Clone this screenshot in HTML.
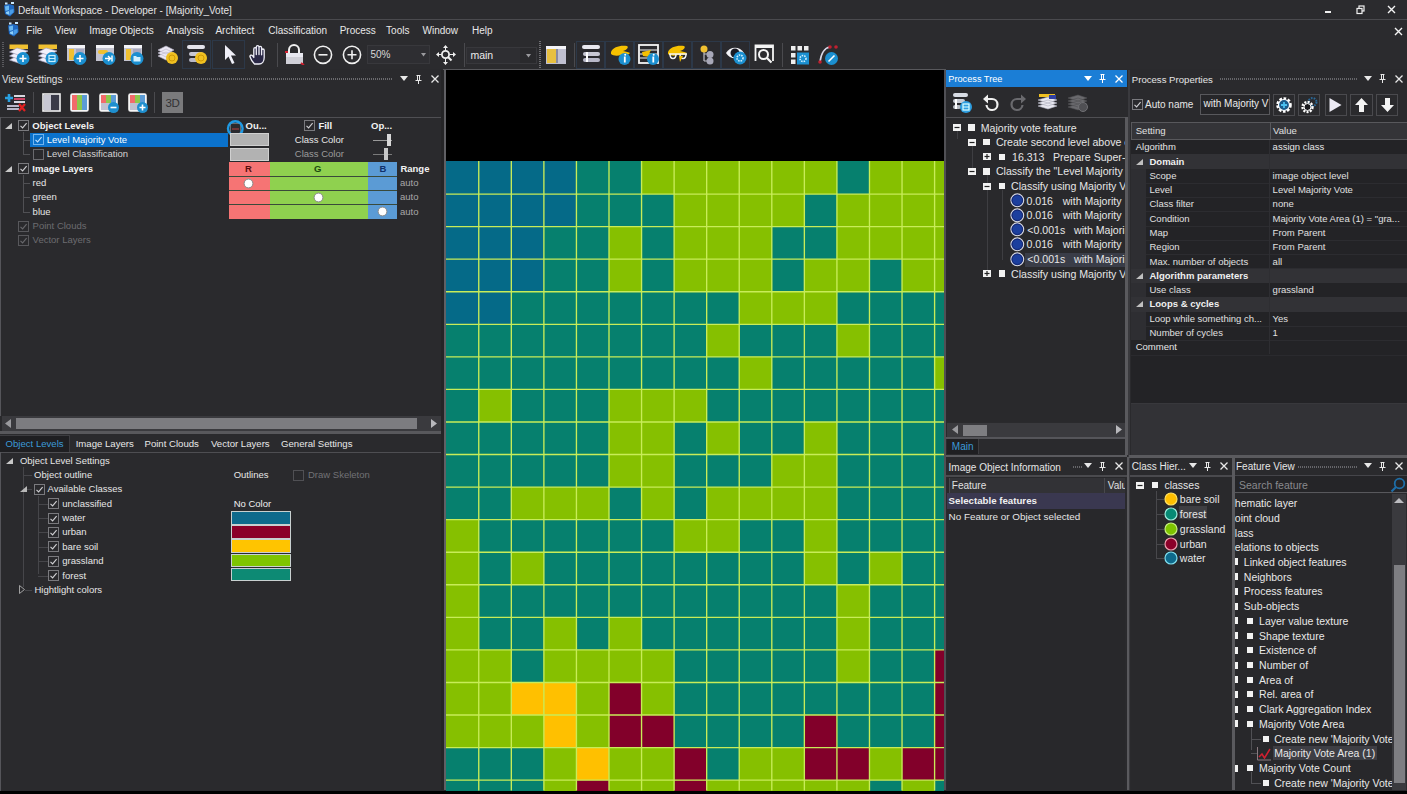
<!DOCTYPE html><html><head><meta charset="utf-8"><style>
html,body{margin:0;padding:0;width:1407px;height:794px;overflow:hidden;background:#2a2a2d;}
body{position:relative;font-family:"Liberation Sans",sans-serif;}
div{position:absolute;box-sizing:border-box;}
.t{white-space:pre;}
</style></head><body>
<div style="left:0px;top:0px;width:1407px;height:19px;background:#2b2b2e;"></div>
<div style="left:0px;top:19px;width:1407px;height:1px;background:#4a4a4e;"></div>
<svg style="position:absolute;left:3px;top:2px;" width="12" height="15" viewBox="0 0 12 15"><path d="M1 3.5 L6 2 L11 3.5 L11.5 10 L7 14.5 L2 12 Z" fill="#1f68c0"/><path d="M2 4.5 L6 3.5 L6 8 L2.5 9 Z" fill="#6ab8f0"/><path d="M6.5 8 L10.5 7 L10.5 10.5 L7 13 Z" fill="#4a9ee8"/><path d="M3 10 L6 9 L6.5 13 L3 11.5 Z" fill="#8ccff8"/><rect x="2" y="0.5" width="2.5" height="2" fill="#c8e8ff"/><rect x="8" y="0" width="3" height="2" fill="#c8e8ff"/></svg>
<div class="t" style="left:18px;top:3.80px;font-size:10px;line-height:14px;color:#e4e4e4;font-weight:400;">Default Workspace - Developer - [Majority_Vote]</div>
<div style="left:1325px;top:11px;width:6px;height:2px;background:#f0f0f0;"></div>
<svg style="position:absolute;left:1356px;top:5px;" width="9" height="10" viewBox="0 0 9 10"><rect x="3" y="1" width="5" height="5" fill="none" stroke="#f0f0f0" stroke-width="1.2"/><rect x="1" y="3.5" width="5" height="5" fill="#2b2b2e" stroke="#f0f0f0" stroke-width="1.2"/></svg>
<svg style="position:absolute;left:1387px;top:5px;" width="9" height="9" viewBox="0 0 9 9"><path d="M1 1 L8 8 M8 1 L1 8" stroke="#f4f4f4" stroke-width="1.4"/></svg>
<div style="left:0px;top:20px;width:1407px;height:20px;background:#2b2b2e;"></div>
<svg style="position:absolute;left:7px;top:22px;" width="12" height="15" viewBox="0 0 12 15"><path d="M1 3.5 L6 2 L11 3.5 L11.5 10 L7 14.5 L2 12 Z" fill="#1f68c0"/><path d="M2 4.5 L6 3.5 L6 8 L2.5 9 Z" fill="#6ab8f0"/><path d="M6.5 8 L10.5 7 L10.5 10.5 L7 13 Z" fill="#4a9ee8"/><path d="M3 10 L6 9 L6.5 13 L3 11.5 Z" fill="#8ccff8"/><rect x="2" y="0.5" width="2.5" height="2" fill="#c8e8ff"/><rect x="8" y="0" width="3" height="2" fill="#c8e8ff"/></svg>
<div class="t" style="left:26.3px;top:24.00px;font-size:10px;line-height:14px;color:#e8e8e8;font-weight:400;">File</div>
<div class="t" style="left:54.7px;top:24.00px;font-size:10px;line-height:14px;color:#e8e8e8;font-weight:400;">View</div>
<div class="t" style="left:89.2px;top:24.00px;font-size:10px;line-height:14px;color:#e8e8e8;font-weight:400;">Image Objects</div>
<div class="t" style="left:166.5px;top:24.00px;font-size:10px;line-height:14px;color:#e8e8e8;font-weight:400;">Analysis</div>
<div class="t" style="left:215.4px;top:24.00px;font-size:10px;line-height:14px;color:#e8e8e8;font-weight:400;">Architect</div>
<div class="t" style="left:268.2px;top:24.00px;font-size:10px;line-height:14px;color:#e8e8e8;font-weight:400;">Classification</div>
<div class="t" style="left:339.7px;top:24.00px;font-size:10px;line-height:14px;color:#e8e8e8;font-weight:400;">Process</div>
<div class="t" style="left:386.1px;top:24.00px;font-size:10px;line-height:14px;color:#e8e8e8;font-weight:400;">Tools</div>
<div class="t" style="left:422.5px;top:24.00px;font-size:10px;line-height:14px;color:#e8e8e8;font-weight:400;">Window</div>
<div class="t" style="left:472px;top:24.00px;font-size:10px;line-height:14px;color:#e8e8e8;font-weight:400;">Help</div>
<svg style="position:absolute;left:1394px;top:27px;" width="9" height="9" viewBox="0 0 9 9"><path d="M1 1 L8 8 M8 1 L1 8" stroke="#f4f4f4" stroke-width="1.4"/></svg>
<div style="left:0px;top:40px;width:1407px;height:29px;background:#2b2b2e;"></div>
<div style="left:443px;top:69px;width:503px;height:1.3px;background:#58585c;"></div>
<div style="left:0px;top:70px;width:444px;height:362px;background:#2a2a2d;"></div>
<div class="t" style="left:2px;top:73.00px;font-size:10px;line-height:14px;color:#e0e0e0;font-weight:400;">View Settings</div>
<div style="left:67px;top:78px;width:326px;height:2px;background:repeating-linear-gradient(90deg,#6a6a6e 0 1px,transparent 1px 2px)"></div>
<svg style="position:absolute;left:400px;top:76px;" width="8" height="5" viewBox="0 0 8 5"><path d="M0 0 L8 0 L4 5 Z" fill="#e8e8e8"/></svg>
<svg style="position:absolute;left:415px;top:74.5px;" width="7" height="9" viewBox="0 0 7 9"><path d="M1.5 0.5 H5.5 M2.5 0.5 V5 M4.5 0.5 V5 M0.5 5.5 H6.5 M3.5 5.5 V9" stroke="#e8e8e8" stroke-width="1" fill="none"/></svg>
<svg style="position:absolute;left:431px;top:75px;" width="8" height="8" viewBox="0 0 8 8"><path d="M0.5 0.5 L7.5 7.5 M7.5 0.5 L0.5 7.5" stroke="#e8e8e8" stroke-width="1.3"/></svg>
<svg style="position:absolute;left:4px;top:92px;" width="22" height="21" viewBox="0 0 22 21"><path d="M5 2 V10 M1 6 H9" stroke="#29a0e0" stroke-width="2.6"/><rect x="10" y="3" width="11" height="2" fill="#d8d8e0"/><rect x="10" y="6" width="11" height="2" fill="#c46"/><rect x="10" y="9" width="11" height="2" fill="#d8d8e0"/><rect x="3" y="13" width="12" height="2" fill="#b8b8c8"/><rect x="3" y="16" width="12" height="2" fill="#b8b8c8"/><path d="M15 12 L21 19 M21 12 L15 19" stroke="#e02020" stroke-width="2.2"/></svg>
<div style="left:33px;top:92px;width:1px;height:21px;background:#4a4a4e;"></div>
<svg style="position:absolute;left:42px;top:93px;" width="19" height="19" viewBox="0 0 19 19"><rect x="1" y="1" width="17" height="17" fill="#3a3a48" stroke="#f0f0f0" stroke-width="1.6"/><rect x="2" y="2" width="7" height="15" fill="#c8c8d4"/></svg>
<svg style="position:absolute;left:70px;top:93px;" width="19" height="19" viewBox="0 0 19 19"><rect x="1" y="1" width="17" height="17" fill="#fff" stroke="#f4f4f4" stroke-width="1.6" rx="1.5"/><rect x="2" y="2" width="5" height="15" fill="#f26b6b"/><rect x="7" y="2" width="5" height="15" fill="#8cc84b"/><rect x="12" y="2" width="5" height="15" fill="#5b9bd5"/></svg>
<svg style="position:absolute;left:99px;top:93px;" width="21" height="21" viewBox="0 0 21 21"><rect x="1" y="1" width="17" height="17" fill="#fff" stroke="#f4f4f4" stroke-width="1.6" rx="1.5"/><rect x="2" y="2" width="5" height="8" fill="#f26b6b"/><rect x="7" y="2" width="5" height="8" fill="#8cc84b"/><rect x="12" y="2" width="5" height="8" fill="#5b9bd5"/><rect x="2" y="10" width="15" height="7" fill="#c0c0d0"/><circle cx="14.5" cy="14.5" r="5.5" fill="#1e8fcf"/><path d="M11.5 14.5 H17.5" stroke="#fff" stroke-width="1.6"/></svg>
<svg style="position:absolute;left:128px;top:93px;" width="21" height="21" viewBox="0 0 21 21"><rect x="1" y="1" width="17" height="17" fill="#fff" stroke="#f4f4f4" stroke-width="1.6" rx="1.5"/><rect x="2" y="2" width="5" height="8" fill="#f26b6b"/><rect x="7" y="2" width="5" height="8" fill="#8cc84b"/><rect x="12" y="2" width="5" height="8" fill="#5b9bd5"/><rect x="2" y="10" width="15" height="7" fill="#c0c0d0"/><circle cx="14.5" cy="14.5" r="5.5" fill="#1e8fcf"/><path d="M11.5 14.5 H17.5 M14.5 11.5 V17.5" stroke="#fff" stroke-width="1.6"/></svg>
<div style="left:154px;top:92px;width:1px;height:21px;background:#4a4a4e;"></div>
<div style="left:162px;top:92px;width:21px;height:21px;background:#7a7a7c;"></div>
<div class="t" style="left:165.5px;top:95.80px;font-size:11.5px;line-height:14px;color:#323234;font-weight:400;letter-spacing:-0.3px;">3D</div>
<div style="left:0px;top:117px;width:443px;height:1px;background:#4f4f53;"></div>
<svg style="position:absolute;left:5px;top:122.5px;" width="7" height="6" viewBox="0 0 7 6"><path d="M7 0 L7 6 L0 6 Z" fill="#c8c8c8"/></svg>
<svg style="position:absolute;left:18px;top:120.0px;" width="11" height="11" viewBox="0 0 11 11"><rect x="0.5" y="0.5" width="10" height="10" fill="none" stroke="#7a7a7e" stroke-width="1"/><path d="M2.5 5.8 L4.6 7.9 L8.6 3.2" fill="none" stroke="#cfcfd2" stroke-width="1.15"/></svg>
<div class="t" style="left:32.3px;top:118.50px;font-size:9.5px;line-height:14px;color:#f2f2f2;font-weight:700;">Object Levels</div>
<div style="left:30px;top:133px;width:198px;height:14px;background:#0b72cc;"></div>
<svg style="position:absolute;left:32.5px;top:134.37px;" width="11" height="11" viewBox="0 0 11 11"><rect x="0.5" y="0.5" width="10" height="10" fill="none" stroke="#6fb4f0" stroke-width="1"/><path d="M2.5 5.8 L4.6 7.9 L8.6 3.2" fill="none" stroke="#bfe0ff" stroke-width="1.15"/></svg>
<div class="t" style="left:46.8px;top:132.87px;font-size:9.5px;line-height:14px;color:#f4fbff;font-weight:400;">Level Majority Vote</div>
<svg style="position:absolute;left:32.5px;top:148.74px;" width="11" height="11" viewBox="0 0 11 11"><rect x="0.5" y="0.5" width="10" height="10" fill="none" stroke="#6a6a6e" stroke-width="1"/></svg>
<div class="t" style="left:46.8px;top:147.24px;font-size:9.5px;line-height:14px;color:#d4d4d4;font-weight:400;">Level Classification</div>
<div style="left:23px;top:132px;width:1px;height:23px;background:#505054;"></div>
<div style="left:23px;top:139.87px;width:7px;height:1px;background:#505054;"></div>
<div style="left:23px;top:154.24px;width:7px;height:1px;background:#505054;"></div>
<svg style="position:absolute;left:5px;top:165.61px;" width="7" height="6" viewBox="0 0 7 6"><path d="M7 0 L7 6 L0 6 Z" fill="#c8c8c8"/></svg>
<svg style="position:absolute;left:18px;top:163.11px;" width="11" height="11" viewBox="0 0 11 11"><rect x="0.5" y="0.5" width="10" height="10" fill="none" stroke="#7a7a7e" stroke-width="1"/><path d="M2.5 5.8 L4.6 7.9 L8.6 3.2" fill="none" stroke="#cfcfd2" stroke-width="1.15"/></svg>
<div class="t" style="left:32.3px;top:161.61px;font-size:9.5px;line-height:14px;color:#f2f2f2;font-weight:700;">Image Layers</div>
<div style="left:23px;top:175px;width:1px;height:37px;background:#505054;"></div>
<div style="left:23px;top:182.98px;width:7px;height:1px;background:#505054;"></div>
<div class="t" style="left:32.6px;top:175.98px;font-size:9.5px;line-height:14px;color:#e6e6e6;font-weight:400;">red</div>
<div style="left:23px;top:197.35px;width:7px;height:1px;background:#505054;"></div>
<div class="t" style="left:32.6px;top:190.35px;font-size:9.5px;line-height:14px;color:#e6e6e6;font-weight:400;">green</div>
<div style="left:23px;top:211.72px;width:7px;height:1px;background:#505054;"></div>
<div class="t" style="left:32.6px;top:204.72px;font-size:9.5px;line-height:14px;color:#e6e6e6;font-weight:400;">blue</div>
<svg style="position:absolute;left:18px;top:220.58999999999997px;" width="11" height="11" viewBox="0 0 11 11"><rect x="0.5" y="0.5" width="10" height="10" fill="none" stroke="#58585c" stroke-width="1"/><path d="M2.5 5.8 L4.6 7.9 L8.6 3.2" fill="none" stroke="#68686c" stroke-width="1.15"/></svg>
<div class="t" style="left:32.6px;top:219.09px;font-size:9.5px;line-height:14px;color:#6c6c70;font-weight:400;">Point Clouds</div>
<svg style="position:absolute;left:18px;top:234.95999999999998px;" width="11" height="11" viewBox="0 0 11 11"><rect x="0.5" y="0.5" width="10" height="10" fill="none" stroke="#58585c" stroke-width="1"/><path d="M2.5 5.8 L4.6 7.9 L8.6 3.2" fill="none" stroke="#68686c" stroke-width="1.15"/></svg>
<div class="t" style="left:32.6px;top:233.46px;font-size:9.5px;line-height:14px;color:#6c6c70;font-weight:400;">Vector Layers</div>
<svg style="position:absolute;left:226px;top:119px;" width="20" height="20" viewBox="0 0 20 20"><rect x="4.5" y="4.5" width="10" height="10" fill="#2a2a2e" stroke="#6a6a6e" stroke-width="1"/><path d="M6 10 H13" stroke="#a04040" stroke-width="1.2"/><circle cx="9.3" cy="9.5" r="7.3" fill="none" stroke="#1f9ae4" stroke-width="2.4"/></svg>
<div class="t" style="left:245.6px;top:118.50px;font-size:9.5px;line-height:14px;color:#f2f2f2;font-weight:700;">Ou...</div>
<svg style="position:absolute;left:304px;top:120.0px;" width="11" height="11" viewBox="0 0 11 11"><rect x="0.5" y="0.5" width="10" height="10" fill="none" stroke="#7a7a7e" stroke-width="1"/><path d="M2.5 5.8 L4.6 7.9 L8.6 3.2" fill="none" stroke="#cfcfd2" stroke-width="1.15"/></svg>
<div class="t" style="left:318.4px;top:118.50px;font-size:9.5px;line-height:14px;color:#f2f2f2;font-weight:700;">Fill</div>
<div class="t" style="left:371px;top:118.50px;font-size:9.5px;line-height:14px;color:#f2f2f2;font-weight:700;">Op...</div>
<div style="left:229.5px;top:133.4px;width:39.5px;height:13px;background:#b2b2b2;border:1px solid #d0d0d0;"></div>
<div style="left:229.5px;top:147.8px;width:39.5px;height:13px;background:#b2b2b2;border:1px solid #d0d0d0;"></div>
<div class="t" style="left:294.8px;top:132.87px;font-size:9.5px;line-height:14px;color:#e6e6e6;font-weight:400;">Class Color</div>
<div class="t" style="left:294.8px;top:147.24px;font-size:9.5px;line-height:14px;color:#9c9c9c;font-weight:400;">Class Color</div>
<div style="left:373px;top:140px;width:19px;height:1px;background:#9a9a9a;"></div>
<div style="left:387px;top:134px;width:4px;height:12px;background:#d8d8d8;"></div>
<div style="left:373px;top:154px;width:19px;height:1px;background:#7a7a7a;"></div>
<div style="left:384px;top:148px;width:3.5px;height:12px;background:#c8c8c8;"></div>
<div style="left:228.8px;top:161.7px;width:40.8px;height:57px;background:#f67474;"></div>
<div style="left:269.6px;top:161.7px;width:98.4px;height:57px;background:#8fd14f;"></div>
<div style="left:368px;top:161.7px;width:28.7px;height:57px;background:#5b9bd5;"></div>
<div style="left:228.8px;top:176.2px;width:167.9px;height:1px;background:#3a4a3a;"></div>
<div style="left:228.8px;top:190.2px;width:167.9px;height:1px;background:#3a4a3a;"></div>
<div style="left:228.8px;top:204.3px;width:167.9px;height:1px;background:#3a4a3a;"></div>
<div class="t" style="left:245px;top:162px;font-size:9.5px;line-height:14px;color:#5a1010;font-weight:700">R</div>
<div class="t" style="left:314px;top:162px;font-size:9.5px;line-height:14px;color:#1b4a10;font-weight:700">G</div>
<div class="t" style="left:379.5px;top:162px;font-size:9.5px;line-height:14px;color:#10306a;font-weight:700">B</div>
<svg style="position:absolute;left:243.0px;top:177.9px;" width="11" height="11" viewBox="0 0 11 11"><circle cx="5.5" cy="5.5" r="4.4" fill="#fff" stroke="#8a8a8a" stroke-width="1"/></svg>
<svg style="position:absolute;left:312.9px;top:191.9px;" width="11" height="11" viewBox="0 0 11 11"><circle cx="5.5" cy="5.5" r="4.4" fill="#fff" stroke="#8a8a8a" stroke-width="1"/></svg>
<svg style="position:absolute;left:376.8px;top:206.3px;" width="11" height="11" viewBox="0 0 11 11"><circle cx="5.5" cy="5.5" r="4.4" fill="#fff" stroke="#8a8a8a" stroke-width="1"/></svg>
<div class="t" style="left:400.4px;top:161.61px;font-size:9.5px;line-height:14px;color:#f2f2f2;font-weight:700;">Range</div>
<div class="t" style="left:400px;top:175.98px;font-size:9.5px;line-height:14px;color:#a8a8a8;font-weight:400;">auto</div>
<div class="t" style="left:400px;top:190.35px;font-size:9.5px;line-height:14px;color:#a8a8a8;font-weight:400;">auto</div>
<div class="t" style="left:400px;top:204.72px;font-size:9.5px;line-height:14px;color:#a8a8a8;font-weight:400;">auto</div>
<div style="left:2px;top:416px;width:440px;height:15px;background:#3a3a3e;"></div>
<div style="left:16px;top:418px;width:401px;height:11px;background:#7c7c80;"></div>
<svg style="position:absolute;left:5px;top:419px;" width="7" height="9" viewBox="0 0 7 9"><path d="M6 0 L6 9 L0 4.5 Z" fill="#9a9a9e"/></svg>
<svg style="position:absolute;left:431px;top:419px;" width="7" height="9" viewBox="0 0 7 9"><path d="M0 0 L0 9 L6 4.5 Z" fill="#b8b8bc"/></svg>
<div style="left:0px;top:431px;width:443px;height:3px;background:#58585c;"></div>
<div style="left:0px;top:434px;width:443px;height:18px;background:#2a2a2d;"></div>
<div style="left:0px;top:435px;width:69.5px;height:17px;background:#1f1f22;border-right:1px solid #3c3c40;border-top:1px solid #3c3c40;"></div>
<div class="t" style="left:5.5px;top:436.80px;font-size:9.6px;line-height:14px;color:#3c9ad8;font-weight:400;">Object Levels</div>
<div class="t" style="left:75.7px;top:436.80px;font-size:9.6px;line-height:14px;color:#e8e8e8;font-weight:400;">Image Layers</div>
<div class="t" style="left:144.5px;top:436.80px;font-size:9.6px;line-height:14px;color:#e8e8e8;font-weight:400;">Point Clouds</div>
<div class="t" style="left:211px;top:436.80px;font-size:9.6px;line-height:14px;color:#e8e8e8;font-weight:400;">Vector Layers</div>
<div class="t" style="left:281px;top:436.80px;font-size:9.6px;line-height:14px;color:#e8e8e8;font-weight:400;">General Settings</div>
<div style="left:0px;top:451.5px;width:443px;height:1.5px;background:#4e4e52;"></div>
<svg style="position:absolute;left:6px;top:457.7px;" width="7" height="6" viewBox="0 0 7 6"><path d="M7 0 L7 6 L0 6 Z" fill="#c8c8c8"/></svg>
<div class="t" style="left:19.9px;top:453.70px;font-size:9.5px;line-height:14px;color:#e6e6e6;font-weight:400;">Object Level Settings</div>
<div style="left:23px;top:467px;width:1px;height:120px;background:#46464a;"></div>
<div style="left:23px;top:475.05px;width:9px;height:1px;background:#46464a;"></div>
<div class="t" style="left:34.1px;top:468.05px;font-size:9.5px;line-height:14px;color:#e6e6e6;font-weight:400;">Object outline</div>
<div class="t" style="left:233.7px;top:468.05px;font-size:9.5px;line-height:14px;color:#e6e6e6;font-weight:400;">Outlines</div>
<svg style="position:absolute;left:293px;top:469.55px;" width="11" height="11" viewBox="0 0 11 11"><rect x="0.5" y="0.5" width="10" height="10" fill="none" stroke="#505054" stroke-width="1"/></svg>
<div class="t" style="left:308px;top:468.05px;font-size:9.5px;line-height:14px;color:#727276;font-weight:400;">Draw Skeleton</div>
<div style="left:23px;top:489.4px;width:9px;height:1px;background:#46464a;"></div>
<svg style="position:absolute;left:20px;top:486.4px;" width="7" height="6" viewBox="0 0 7 6"><path d="M7 0 L7 6 L0 6 Z" fill="#b8b8b8"/></svg>
<svg style="position:absolute;left:33.5px;top:483.9px;" width="11" height="11" viewBox="0 0 11 11"><rect x="0.5" y="0.5" width="10" height="10" fill="none" stroke="#7a7a7e" stroke-width="1"/><path d="M2.5 5.8 L4.6 7.9 L8.6 3.2" fill="none" stroke="#cfcfd2" stroke-width="1.15"/></svg>
<div class="t" style="left:47.5px;top:482.40px;font-size:9.5px;line-height:14px;color:#e6e6e6;font-weight:400;">Available Classes</div>
<div style="left:37.5px;top:496px;width:1px;height:78px;background:#46464a;"></div>
<div style="left:37.5px;top:503.75px;width:10px;height:1px;background:#46464a;"></div>
<svg style="position:absolute;left:48px;top:498.25px;" width="11" height="11" viewBox="0 0 11 11"><rect x="0.5" y="0.5" width="10" height="10" fill="none" stroke="#7a7a7e" stroke-width="1"/><path d="M2.5 5.8 L4.6 7.9 L8.6 3.2" fill="none" stroke="#cfcfd2" stroke-width="1.15"/></svg>
<div class="t" style="left:62.3px;top:496.75px;font-size:9.5px;line-height:14px;color:#e6e6e6;font-weight:400;">unclassified</div>
<div style="left:37.5px;top:518.1px;width:10px;height:1px;background:#46464a;"></div>
<svg style="position:absolute;left:48px;top:512.6px;" width="11" height="11" viewBox="0 0 11 11"><rect x="0.5" y="0.5" width="10" height="10" fill="none" stroke="#7a7a7e" stroke-width="1"/><path d="M2.5 5.8 L4.6 7.9 L8.6 3.2" fill="none" stroke="#cfcfd2" stroke-width="1.15"/></svg>
<div class="t" style="left:62.3px;top:511.10px;font-size:9.5px;line-height:14px;color:#e6e6e6;font-weight:400;">water</div>
<div style="left:37.5px;top:532.45px;width:10px;height:1px;background:#46464a;"></div>
<svg style="position:absolute;left:48px;top:526.95px;" width="11" height="11" viewBox="0 0 11 11"><rect x="0.5" y="0.5" width="10" height="10" fill="none" stroke="#7a7a7e" stroke-width="1"/><path d="M2.5 5.8 L4.6 7.9 L8.6 3.2" fill="none" stroke="#cfcfd2" stroke-width="1.15"/></svg>
<div class="t" style="left:62.3px;top:525.45px;font-size:9.5px;line-height:14px;color:#e6e6e6;font-weight:400;">urban</div>
<div style="left:37.5px;top:546.8px;width:10px;height:1px;background:#46464a;"></div>
<svg style="position:absolute;left:48px;top:541.3px;" width="11" height="11" viewBox="0 0 11 11"><rect x="0.5" y="0.5" width="10" height="10" fill="none" stroke="#7a7a7e" stroke-width="1"/><path d="M2.5 5.8 L4.6 7.9 L8.6 3.2" fill="none" stroke="#cfcfd2" stroke-width="1.15"/></svg>
<div class="t" style="left:62.3px;top:539.80px;font-size:9.5px;line-height:14px;color:#e6e6e6;font-weight:400;">bare soil</div>
<div style="left:37.5px;top:561.15px;width:10px;height:1px;background:#46464a;"></div>
<svg style="position:absolute;left:48px;top:555.65px;" width="11" height="11" viewBox="0 0 11 11"><rect x="0.5" y="0.5" width="10" height="10" fill="none" stroke="#7a7a7e" stroke-width="1"/><path d="M2.5 5.8 L4.6 7.9 L8.6 3.2" fill="none" stroke="#cfcfd2" stroke-width="1.15"/></svg>
<div class="t" style="left:62.3px;top:554.15px;font-size:9.5px;line-height:14px;color:#e6e6e6;font-weight:400;">grassland</div>
<div style="left:37.5px;top:575.5px;width:10px;height:1px;background:#46464a;"></div>
<svg style="position:absolute;left:48px;top:570.0px;" width="11" height="11" viewBox="0 0 11 11"><rect x="0.5" y="0.5" width="10" height="10" fill="none" stroke="#7a7a7e" stroke-width="1"/><path d="M2.5 5.8 L4.6 7.9 L8.6 3.2" fill="none" stroke="#cfcfd2" stroke-width="1.15"/></svg>
<div class="t" style="left:62.3px;top:568.50px;font-size:9.5px;line-height:14px;color:#e6e6e6;font-weight:400;">forest</div>
<div class="t" style="left:233.7px;top:496.75px;font-size:9.5px;line-height:14px;color:#f0f0f0;font-weight:400;">No Color</div>
<div style="left:231.3px;top:511.0px;width:59.5px;height:13.5px;background:#0e6a8c;border:1px solid #c8d0d0;"></div>
<div style="left:231.3px;top:525.2px;width:59.5px;height:13.5px;background:#8b0029;border:1px solid #c8d0d0;"></div>
<div style="left:231.3px;top:539.4px;width:59.5px;height:13.5px;background:#ffc400;border:1px solid #c8d0d0;"></div>
<div style="left:231.3px;top:553.6px;width:59.5px;height:13.5px;background:#7ec400;border:1px solid #c8d0d0;"></div>
<div style="left:231.3px;top:567.8px;width:59.5px;height:13.5px;background:#0d8a74;border:1px solid #c8d0d0;"></div>
<svg style="position:absolute;left:19px;top:585.35px;" width="6" height="9" viewBox="0 0 6 9"><path d="M0.5 0.5 L5.5 4.5 L0.5 8.5 Z" fill="none" stroke="#a0a0a0" stroke-width="1"/></svg>
<div style="left:25px;top:589.85px;width:7px;height:1px;background:#46464a;"></div>
<div class="t" style="left:34.5px;top:582.85px;font-size:9.5px;line-height:14px;color:#e6e6e6;font-weight:400;">Hightlight colors</div>
<div style="left:946px;top:70px;width:181px;height:385px;background:#2a2a2d;"></div>
<div style="left:946px;top:70px;width:181px;height:17px;background:#1b7ed6;"></div>
<div class="t" style="left:948.3px;top:72.00px;font-size:9.2px;line-height:14px;color:#ffffff;font-weight:400;">Process Tree</div>
<svg style="position:absolute;left:1084px;top:75.5px;" width="8" height="5" viewBox="0 0 8 5"><path d="M0 0 L8 0 L4 5 Z" fill="#ffffff"/></svg>
<svg style="position:absolute;left:1099px;top:74.0px;" width="7" height="9" viewBox="0 0 7 9"><path d="M1.5 0.5 H5.5 M2.5 0.5 V5 M4.5 0.5 V5 M0.5 5.5 H6.5 M3.5 5.5 V9" stroke="#ffffff" stroke-width="1" fill="none"/></svg>
<svg style="position:absolute;left:1115px;top:74.5px;" width="8" height="8" viewBox="0 0 8 8"><path d="M0.5 0.5 L7.5 7.5 M7.5 0.5 L0.5 7.5" stroke="#ffffff" stroke-width="1.3"/></svg>
<svg style="position:absolute;left:951px;top:91px;" width="23" height="23" viewBox="0 0 23 23"><rect x="2" y="2" width="15" height="4" rx="2" fill="#d8dce4"/><rect x="2" y="8" width="12" height="4" rx="2" fill="#c8ccd4"/><rect x="2" y="14" width="8" height="4" rx="2" fill="#b8bcc4"/><rect x="4" y="8" width="2" height="10" fill="#fff"/><circle cx="15" cy="16" r="6" fill="#2e9ee0"/><rect x="12" y="13" width="6" height="6" fill="none" stroke="#dff" stroke-width="1.2"/><path d="M12 16 H18" stroke="#dff" stroke-width="1"/></svg>
<svg style="position:absolute;left:982px;top:93px;" width="18" height="20" viewBox="0 0 18 20"><path d="M5 6 H10 A5.5 5.5 0 1 1 4.5 12" fill="none" stroke="#f0f0f0" stroke-width="2.2"/><path d="M1 6 L6 1.5 L6 10.5 Z" fill="#f0f0f0"/></svg>
<svg style="position:absolute;left:1009px;top:93px;" width="18" height="20" viewBox="0 0 18 20"><path d="M13 6 H8 A5.5 5.5 0 1 0 13.5 12" fill="none" stroke="#6a6a6e" stroke-width="2.2"/><path d="M17 6 L12 1.5 L12 10.5 Z" fill="#6a6a6e"/></svg>
<svg style="position:absolute;left:1036px;top:92px;" width="23" height="21" viewBox="0 0 23 21"><rect x="3" y="2" width="16" height="3" fill="#f0c020"/><path d="M2 8 L12 5 L21 8 L12 11 Z M2 11 L12 8 L21 11 L12 14 Z M2 14 L12 11 L21 14 L12 17 Z" fill="#e8e8f0" stroke="#b0b0c0" stroke-width="0.6"/><rect x="13" y="3" width="7" height="4" fill="#3040a0"/></svg>
<svg style="position:absolute;left:1066px;top:92px;" width="23" height="21" viewBox="0 0 23 21"><path d="M2 6 L12 3 L21 6 L12 9 Z M2 9 L12 6 L21 9 L12 12 Z M2 12 L12 9 L21 12 L12 15 Z M2 15 L12 12 L21 15 L12 18 Z" fill="#6a6a6e" stroke="#505054" stroke-width="0.6"/><circle cx="17" cy="15" r="4.5" fill="#505054" stroke="#707074"/></svg>
<div style="left:946px;top:117px;width:181px;height:1px;background:#4f4f53;"></div>
<div style="left:947px;top:118px;width:178px;height:304px;background:#29292c;"></div>
<div style="left:947px;top:118px;width:180px;height:304px;overflow:hidden">
<div style="left:-947px;top:-118px;width:1407px;height:794px">
<div style="left:956.5px;top:131px;width:1px;height:8px;background:#3e3e42;"></div>
<div style="left:971.5px;top:146px;width:1px;height:24px;background:#3e3e42;"></div>
<div style="left:986.5px;top:175px;width:1px;height:95px;background:#3e3e42;"></div>
<div style="left:1001.5px;top:190px;width:1px;height:70px;background:#3e3e42;"></div>
<svg style="position:absolute;left:952.6px;top:124.1px;" width="8" height="7" viewBox="0 0 8 7"><rect x="0" y="0" width="8" height="7" fill="#f2f2f2"/><path d="M1.5 3.5 H6.5" stroke="#222" stroke-width="1.2"/></svg>
<div style="left:968px;top:124.35px;width:6.5px;height:6.5px;background:#f2f2f2;"></div>
<div class="t" style="left:980.7px;top:120.60px;font-size:10.6px;line-height:14px;color:#e6e6e6;font-weight:400;">Majority vote feature</div>
<svg style="position:absolute;left:967.7px;top:138.7px;" width="8" height="7" viewBox="0 0 8 7"><rect x="0" y="0" width="8" height="7" fill="#f2f2f2"/><path d="M1.5 3.5 H6.5" stroke="#222" stroke-width="1.2"/></svg>
<div style="left:983.3px;top:138.95px;width:6.5px;height:6.5px;background:#f2f2f2;"></div>
<div class="t" style="left:995.9px;top:135.20px;font-size:10.6px;line-height:14px;color:#e6e6e6;font-weight:400;">Create second level above e</div>
<svg style="position:absolute;left:983px;top:153.29999999999998px;" width="8" height="7" viewBox="0 0 8 7"><rect x="0" y="0" width="8" height="7" fill="#f2f2f2"/><path d="M1.5 3.5 H6.5" stroke="#222" stroke-width="1.2"/><path d="M4 1 V6" stroke="#222" stroke-width="1.2"/></svg>
<div style="left:998.9px;top:153.54999999999998px;width:6.5px;height:6.5px;background:#f2f2f2;"></div>
<div class="t" style="left:1012px;top:149.80px;font-size:10.6px;line-height:14px;color:#e6e6e6;font-weight:400;">16.313</div>
<div class="t" style="left:1053px;top:149.80px;font-size:10.6px;line-height:14px;color:#e6e6e6;font-weight:400;">Prepare Super-I</div>
<svg style="position:absolute;left:967.7px;top:167.89999999999998px;" width="8" height="7" viewBox="0 0 8 7"><rect x="0" y="0" width="8" height="7" fill="#f2f2f2"/><path d="M1.5 3.5 H6.5" stroke="#222" stroke-width="1.2"/></svg>
<div style="left:983.3px;top:168.14999999999998px;width:6.5px;height:6.5px;background:#f2f2f2;"></div>
<div class="t" style="left:995.9px;top:164.40px;font-size:10.6px;line-height:14px;color:#e6e6e6;font-weight:400;">Classify the &quot;Level Majority V</div>
<svg style="position:absolute;left:983px;top:182.5px;" width="8" height="7" viewBox="0 0 8 7"><rect x="0" y="0" width="8" height="7" fill="#f2f2f2"/><path d="M1.5 3.5 H6.5" stroke="#222" stroke-width="1.2"/></svg>
<div style="left:998.9px;top:182.75px;width:6.5px;height:6.5px;background:#f2f2f2;"></div>
<div class="t" style="left:1011px;top:179.00px;font-size:10.6px;line-height:14px;color:#e6e6e6;font-weight:400;">Classify using Majority Ve</div>
<div style="left:1024.5px;top:252.6px;width:102px;height:14.2px;background:#3a3d48;"></div>
<svg style="position:absolute;left:1010px;top:193.1px;" width="15" height="15" viewBox="0 0 15 15"><circle cx="7.3" cy="7.3" r="6.4" fill="#1c3f9e" stroke="#d8d8e0" stroke-width="1.1"/><circle cx="7.3" cy="7.3" r="5.2" fill="none" stroke="#15256a" stroke-width="0.9"/></svg>
<div class="t" style="left:1026.5px;top:193.60px;font-size:10.6px;line-height:14px;color:#e6e6e6;font-weight:400;">0.016</div>
<div class="t" style="left:1062.7px;top:193.60px;font-size:10.6px;line-height:14px;color:#e6e6e6;font-weight:400;">with Majority</div>
<svg style="position:absolute;left:1010px;top:207.7px;" width="15" height="15" viewBox="0 0 15 15"><circle cx="7.3" cy="7.3" r="6.4" fill="#1c3f9e" stroke="#d8d8e0" stroke-width="1.1"/><circle cx="7.3" cy="7.3" r="5.2" fill="none" stroke="#15256a" stroke-width="0.9"/></svg>
<div class="t" style="left:1026.5px;top:208.20px;font-size:10.6px;line-height:14px;color:#e6e6e6;font-weight:400;">0.016</div>
<div class="t" style="left:1062.7px;top:208.20px;font-size:10.6px;line-height:14px;color:#e6e6e6;font-weight:400;">with Majority</div>
<svg style="position:absolute;left:1010px;top:222.3px;" width="15" height="15" viewBox="0 0 15 15"><circle cx="7.3" cy="7.3" r="6.4" fill="#1c3f9e" stroke="#d8d8e0" stroke-width="1.1"/><circle cx="7.3" cy="7.3" r="5.2" fill="none" stroke="#15256a" stroke-width="0.9"/></svg>
<div class="t" style="left:1027.3px;top:222.80px;font-size:10.6px;line-height:14px;color:#e6e6e6;font-weight:400;">&lt;0.001s</div>
<div class="t" style="left:1074px;top:222.80px;font-size:10.6px;line-height:14px;color:#e6e6e6;font-weight:400;">with Majori</div>
<svg style="position:absolute;left:1010px;top:236.89999999999998px;" width="15" height="15" viewBox="0 0 15 15"><circle cx="7.3" cy="7.3" r="6.4" fill="#1c3f9e" stroke="#d8d8e0" stroke-width="1.1"/><circle cx="7.3" cy="7.3" r="5.2" fill="none" stroke="#15256a" stroke-width="0.9"/></svg>
<div class="t" style="left:1026.5px;top:237.40px;font-size:10.6px;line-height:14px;color:#e6e6e6;font-weight:400;">0.016</div>
<div class="t" style="left:1062.7px;top:237.40px;font-size:10.6px;line-height:14px;color:#e6e6e6;font-weight:400;">with Majority</div>
<svg style="position:absolute;left:1010px;top:251.5px;" width="15" height="15" viewBox="0 0 15 15"><circle cx="7.3" cy="7.3" r="6.4" fill="#1c3f9e" stroke="#d8d8e0" stroke-width="1.1"/><circle cx="7.3" cy="7.3" r="5.2" fill="none" stroke="#15256a" stroke-width="0.9"/></svg>
<div class="t" style="left:1027.3px;top:252.00px;font-size:10.6px;line-height:14px;color:#e6e6e6;font-weight:400;">&lt;0.001s</div>
<div class="t" style="left:1074px;top:252.00px;font-size:10.6px;line-height:14px;color:#e6e6e6;font-weight:400;">with Majori</div>
<svg style="position:absolute;left:983px;top:270.1px;" width="8" height="7" viewBox="0 0 8 7"><rect x="0" y="0" width="8" height="7" fill="#f2f2f2"/><path d="M1.5 3.5 H6.5" stroke="#222" stroke-width="1.2"/><path d="M4 1 V6" stroke="#222" stroke-width="1.2"/></svg>
<div style="left:998.9px;top:270.35px;width:6.5px;height:6.5px;background:#f2f2f2;"></div>
<div class="t" style="left:1011px;top:266.60px;font-size:10.6px;line-height:14px;color:#e6e6e6;font-weight:400;">Classify using Majority Ve</div>
</div></div>
<div style="left:947px;top:422.8px;width:178px;height:14px;background:#3a3a3e;"></div>
<div style="left:962.8px;top:424.5px;width:24.2px;height:11px;background:#7e7e82;"></div>
<svg style="position:absolute;left:952px;top:425px;" width="7" height="9" viewBox="0 0 7 9"><path d="M6 0 L6 9 L0 4.5 Z" fill="#9a9a9e"/></svg>
<svg style="position:absolute;left:1115.5px;top:425px;" width="7" height="9" viewBox="0 0 7 9"><path d="M0 0 L0 9 L6 4.5 Z" fill="#b8b8bc"/></svg>
<div style="left:946px;top:437px;width:181px;height:1.6px;background:#55555a;"></div>
<div style="left:947px;top:438.6px;width:32px;height:15.4px;background:#1f1f22;border-right:1px solid #3c3c40;"></div>
<div class="t" style="left:951.8px;top:440.00px;font-size:10px;line-height:14px;color:#3c9ad8;font-weight:400;">Main</div>
<div style="left:1125.4px;top:117px;width:2.4px;height:338px;background:#5a5a5e;"></div>
<div style="left:1129px;top:70px;width:278px;height:385px;background:#2a2a2d;"></div>
<div style="left:1127.8px;top:70px;width:2px;height:720px;background:#3a3a3e;"></div>
<div class="t" style="left:1131.8px;top:72.50px;font-size:9.6px;line-height:14px;color:#e4e4e4;font-weight:400;">Process Properties</div>
<div style="left:1220px;top:78px;width:138px;height:2px;background:repeating-linear-gradient(90deg,#66666a 0 1px,transparent 1px 2px)"></div>
<svg style="position:absolute;left:1364px;top:75.5px;" width="8" height="5" viewBox="0 0 8 5"><path d="M0 0 L8 0 L4 5 Z" fill="#e8e8e8"/></svg>
<svg style="position:absolute;left:1379px;top:74.0px;" width="7" height="9" viewBox="0 0 7 9"><path d="M1.5 0.5 H5.5 M2.5 0.5 V5 M4.5 0.5 V5 M0.5 5.5 H6.5 M3.5 5.5 V9" stroke="#e8e8e8" stroke-width="1" fill="none"/></svg>
<svg style="position:absolute;left:1395px;top:74.5px;" width="8" height="8" viewBox="0 0 8 8"><path d="M0.5 0.5 L7.5 7.5 M7.5 0.5 L0.5 7.5" stroke="#e8e8e8" stroke-width="1.3"/></svg>
<svg style="position:absolute;left:1132px;top:99px;" width="11" height="11" viewBox="0 0 11 11"><rect x="0.5" y="0.5" width="10" height="10" fill="none" stroke="#7a7a7e" stroke-width="1"/><path d="M2.5 5.8 L4.6 7.9 L8.6 3.2" fill="none" stroke="#cfcfd2" stroke-width="1.15"/></svg>
<div class="t" style="left:1145px;top:98.00px;font-size:10px;line-height:14px;color:#e6e6e6;font-weight:400;">Auto name</div>
<div style="left:1199.5px;top:94.4px;width:70px;height:20.6px;background:#262629;border:1px solid #58585c;"></div>
<div style="left:1200.5px;top:95.4px;width:68px;height:18px;overflow:hidden"><div class="t" style="left:3px;top:2px;font-size:10px;line-height:14px;color:#ececec">with Majority V</div></div>
<div style="left:1272.6px;top:93.8px;width:22.4px;height:22.7px;background:#2a2a2d;border:1px solid #4a4a4e;"></div>
<div style="left:1297.8px;top:93.8px;width:22.4px;height:22.7px;background:#2a2a2d;border:1px solid #4a4a4e;"></div>
<div style="left:1324.6px;top:93.8px;width:22.4px;height:22.7px;background:#2a2a2d;border:1px solid #4a4a4e;"></div>
<div style="left:1350.4px;top:93.8px;width:22.4px;height:22.7px;background:#2a2a2d;border:1px solid #4a4a4e;"></div>
<div style="left:1376px;top:93.8px;width:22.4px;height:22.7px;background:#2a2a2d;border:1px solid #4a4a4e;"></div>
<svg style="position:absolute;left:1275px;top:96px;" width="18" height="18" viewBox="0 0 18 18"><circle cx="9" cy="9" r="6.5" fill="none" stroke="#fff" stroke-width="2.6" stroke-dasharray="2.6 1.6"/><circle cx="9" cy="9" r="5.5" fill="#1a5a8a" stroke="#fff" stroke-width="1.2"/><path d="M6 9 H12 M9 6 V12" stroke="#4ac0f0" stroke-width="1.8"/></svg>
<svg style="position:absolute;left:1300px;top:96px;" width="18" height="18" viewBox="0 0 18 18"><circle cx="12.5" cy="6" r="4" fill="none" stroke="#2a6a9a" stroke-width="2" stroke-dasharray="1.6 1.2"/><circle cx="7.5" cy="11" r="5" fill="none" stroke="#fff" stroke-width="2.4" stroke-dasharray="2 1.3"/><circle cx="7.5" cy="11" r="3.5" fill="#1a1a1e" stroke="#fff" stroke-width="1"/></svg>
<svg style="position:absolute;left:1327px;top:97px;" width="17" height="16" viewBox="0 0 17 16"><path d="M2.5 1 L14.5 8 L2.5 15 Z" fill="#eceaf4"/></svg>
<svg style="position:absolute;left:1353px;top:97px;" width="17" height="16" viewBox="0 0 17 16"><path d="M8.5 1 L15 8 L11 8 L11 15 L6 15 L6 8 L2 8 Z" fill="#f4f4f4"/></svg>
<svg style="position:absolute;left:1379px;top:97px;" width="17" height="16" viewBox="0 0 17 16"><path d="M8.5 15 L15 8 L11 8 L11 1 L6 1 L6 8 L2 8 Z" fill="#f4f4f4"/></svg>
<div style="left:1131px;top:122px;width:276px;height:18.4px;background:#343438;border-top:1px solid #58585c;border-bottom:1px solid #58585c;border-left:1px solid #58585c;"></div>
<div style="left:1269.5px;top:122px;width:1px;height:18.4px;background:#58585c;"></div>
<div class="t" style="left:1135.7px;top:124.20px;font-size:9.6px;line-height:14px;color:#e0e0e0;font-weight:400;">Setting</div>
<div class="t" style="left:1273px;top:124.20px;font-size:9.6px;line-height:14px;color:#e0e0e0;font-weight:400;">Value</div>
<div style="left:1131px;top:140.4px;width:276px;height:314px;background:#232326;"></div>
<div class="t" style="left:1135.7px;top:140.25px;font-size:9.5px;line-height:14px;color:#e6e6e6;font-weight:400;">Algorithm</div>
<div class="t" style="left:1272.6px;top:140.25px;font-size:9.5px;line-height:14px;color:#e6e6e6;font-weight:400;">assign class</div>
<div style="left:1131px;top:154.39px;width:276px;height:14.29px;background:#323236;"></div>
<svg style="position:absolute;left:1136px;top:158.54px;" width="7" height="6" viewBox="0 0 7 6"><path d="M7 0 L7 6 L0 6 Z" fill="#c0c0c0"/></svg>
<div class="t" style="left:1149.5px;top:154.54px;font-size:9.5px;line-height:14px;color:#f0f0f0;font-weight:700;">Domain</div>
<div style="left:1131px;top:168.67999999999998px;width:15px;height:14.29px;background:#2e2e32;"></div>
<div style="left:1146px;top:182.67999999999998px;width:261px;height:1px;background:#2c2c30;"></div>
<div class="t" style="left:1149.5px;top:168.83px;font-size:9.5px;line-height:14px;color:#e0e0e0;font-weight:400;">Scope</div>
<div class="t" style="left:1272.6px;top:168.83px;font-size:9.5px;line-height:14px;color:#e0e0e0;font-weight:400;">image object level</div>
<div style="left:1131px;top:182.97px;width:15px;height:14.29px;background:#2e2e32;"></div>
<div style="left:1146px;top:196.97px;width:261px;height:1px;background:#2c2c30;"></div>
<div class="t" style="left:1149.5px;top:183.12px;font-size:9.5px;line-height:14px;color:#e0e0e0;font-weight:400;">Level</div>
<div class="t" style="left:1272.6px;top:183.12px;font-size:9.5px;line-height:14px;color:#e0e0e0;font-weight:400;">Level Majority Vote</div>
<div style="left:1131px;top:197.26px;width:15px;height:14.29px;background:#2e2e32;"></div>
<div style="left:1146px;top:211.26px;width:261px;height:1px;background:#2c2c30;"></div>
<div class="t" style="left:1149.5px;top:197.41px;font-size:9.5px;line-height:14px;color:#e0e0e0;font-weight:400;">Class filter</div>
<div class="t" style="left:1272.6px;top:197.41px;font-size:9.5px;line-height:14px;color:#e0e0e0;font-weight:400;">none</div>
<div style="left:1131px;top:211.54999999999998px;width:15px;height:14.29px;background:#2e2e32;"></div>
<div style="left:1146px;top:225.54999999999998px;width:261px;height:1px;background:#2c2c30;"></div>
<div class="t" style="left:1149.5px;top:211.70px;font-size:9.5px;line-height:14px;color:#e0e0e0;font-weight:400;">Condition</div>
<div class="t" style="left:1272.6px;top:211.70px;font-size:9.5px;line-height:14px;color:#e0e0e0;font-weight:400;">Majority Vote Area (1) = &quot;gra...</div>
<div style="left:1131px;top:225.84px;width:15px;height:14.29px;background:#2e2e32;"></div>
<div style="left:1146px;top:239.84px;width:261px;height:1px;background:#2c2c30;"></div>
<div class="t" style="left:1149.5px;top:225.99px;font-size:9.5px;line-height:14px;color:#e0e0e0;font-weight:400;">Map</div>
<div class="t" style="left:1272.6px;top:225.99px;font-size:9.5px;line-height:14px;color:#e0e0e0;font-weight:400;">From Parent</div>
<div style="left:1131px;top:240.13px;width:15px;height:14.29px;background:#2e2e32;"></div>
<div style="left:1146px;top:254.13px;width:261px;height:1px;background:#2c2c30;"></div>
<div class="t" style="left:1149.5px;top:240.28px;font-size:9.5px;line-height:14px;color:#e0e0e0;font-weight:400;">Region</div>
<div class="t" style="left:1272.6px;top:240.28px;font-size:9.5px;line-height:14px;color:#e0e0e0;font-weight:400;">From Parent</div>
<div style="left:1131px;top:254.42px;width:15px;height:14.29px;background:#2e2e32;"></div>
<div style="left:1146px;top:268.41999999999996px;width:261px;height:1px;background:#2c2c30;"></div>
<div class="t" style="left:1149.5px;top:254.57px;font-size:9.5px;line-height:14px;color:#e0e0e0;font-weight:400;">Max. number of objects</div>
<div class="t" style="left:1272.6px;top:254.57px;font-size:9.5px;line-height:14px;color:#e0e0e0;font-weight:400;">all</div>
<div style="left:1131px;top:268.71000000000004px;width:276px;height:14.29px;background:#323236;"></div>
<svg style="position:absolute;left:1136px;top:272.86px;" width="7" height="6" viewBox="0 0 7 6"><path d="M7 0 L7 6 L0 6 Z" fill="#c0c0c0"/></svg>
<div class="t" style="left:1149.5px;top:268.86px;font-size:9.5px;line-height:14px;color:#f0f0f0;font-weight:700;">Algorithm parameters</div>
<div style="left:1131px;top:283.0px;width:15px;height:14.29px;background:#2e2e32;"></div>
<div style="left:1146px;top:297.0px;width:261px;height:1px;background:#2c2c30;"></div>
<div class="t" style="left:1149.5px;top:283.15px;font-size:9.5px;line-height:14px;color:#e0e0e0;font-weight:400;">Use class</div>
<div class="t" style="left:1272.6px;top:283.15px;font-size:9.5px;line-height:14px;color:#e0e0e0;font-weight:400;">grassland</div>
<div style="left:1131px;top:297.29px;width:276px;height:14.29px;background:#323236;"></div>
<svg style="position:absolute;left:1136px;top:301.44px;" width="7" height="6" viewBox="0 0 7 6"><path d="M7 0 L7 6 L0 6 Z" fill="#c0c0c0"/></svg>
<div class="t" style="left:1149.5px;top:297.44px;font-size:9.5px;line-height:14px;color:#f0f0f0;font-weight:700;">Loops &amp; cycles</div>
<div style="left:1131px;top:311.58000000000004px;width:15px;height:14.29px;background:#2e2e32;"></div>
<div style="left:1146px;top:325.58000000000004px;width:261px;height:1px;background:#2c2c30;"></div>
<div class="t" style="left:1149.5px;top:311.73px;font-size:9.5px;line-height:14px;color:#e0e0e0;font-weight:400;">Loop while something ch...</div>
<div class="t" style="left:1272.6px;top:311.73px;font-size:9.5px;line-height:14px;color:#e0e0e0;font-weight:400;">Yes</div>
<div style="left:1131px;top:325.87px;width:15px;height:14.29px;background:#2e2e32;"></div>
<div style="left:1146px;top:339.87px;width:261px;height:1px;background:#2c2c30;"></div>
<div class="t" style="left:1149.5px;top:326.02px;font-size:9.5px;line-height:14px;color:#e0e0e0;font-weight:400;">Number of cycles</div>
<div class="t" style="left:1272.6px;top:326.02px;font-size:9.5px;line-height:14px;color:#e0e0e0;font-weight:400;">1</div>
<div class="t" style="left:1135.7px;top:340.31px;font-size:9.5px;line-height:14px;color:#e6e6e6;font-weight:400;">Comment</div>
<div style="left:1268.5px;top:140.4px;width:1px;height:214px;background:#2e2e32;"></div>
<div style="left:1131px;top:355px;width:276px;height:1px;background:#2a2a2e;"></div>
<div style="left:1131px;top:403px;width:276px;height:52px;background:#323236;"></div>
<div style="left:1131px;top:403px;width:276px;height:1px;background:#38383c;"></div>
<div style="left:1129px;top:455px;width:278px;height:2.6px;background:#5a5a5e;"></div>
<div style="left:946px;top:455px;width:181px;height:2.4px;background:#5a5a5e;"></div>
<div style="left:946px;top:457.4px;width:181px;height:333px;background:#2a2a2d;"></div>
<div class="t" style="left:948.6px;top:460.60px;font-size:10px;line-height:14px;color:#e6e6e6;font-weight:400;">Image Object Information</div>
<div style="left:1073px;top:465.5px;width:10px;height:2px;background:repeating-linear-gradient(90deg,#66666a 0 1px,transparent 1px 2px)"></div>
<svg style="position:absolute;left:1084px;top:463px;" width="8" height="5" viewBox="0 0 8 5"><path d="M0 0 L8 0 L4 5 Z" fill="#e8e8e8"/></svg>
<svg style="position:absolute;left:1099px;top:461.5px;" width="7" height="9" viewBox="0 0 7 9"><path d="M1.5 0.5 H5.5 M2.5 0.5 V5 M4.5 0.5 V5 M0.5 5.5 H6.5 M3.5 5.5 V9" stroke="#e8e8e8" stroke-width="1" fill="none"/></svg>
<svg style="position:absolute;left:1115px;top:462px;" width="8" height="8" viewBox="0 0 8 8"><path d="M0.5 0.5 L7.5 7.5 M7.5 0.5 L0.5 7.5" stroke="#e8e8e8" stroke-width="1.3"/></svg>
<div style="left:946px;top:475px;width:181px;height:2px;background:#4a4a4e;"></div>
<div style="left:947px;top:477px;width:178px;height:313px;background:#28282b;"></div>
<div style="left:949px;top:477.5px;width:176px;height:15.2px;background:#323236;border-left:1px solid #48484c;"></div>
<div style="left:1103.5px;top:477.5px;width:1px;height:15.2px;background:#48484c;"></div>
<div class="t" style="left:951.8px;top:478.60px;font-size:10px;line-height:14px;color:#e0e0e0;font-weight:400;">Feature</div>
<div style="left:1104px;top:477.5px;width:21px;height:15px;overflow:hidden"><div class="t" style="left:3.8px;top:1px;font-size:10px;line-height:14px;color:#e0e0e0">Valu</div></div>
<div style="left:947px;top:493.4px;width:178px;height:15.2px;background:#3a3850;"></div>
<div class="t" style="left:948.6px;top:494.00px;font-size:9.7px;line-height:14px;color:#f0f0f0;font-weight:700;">Selectable features</div>
<div class="t" style="left:948.6px;top:510.00px;font-size:9.9px;line-height:14px;color:#e6e6e6;font-weight:400;">No Feature or Object selected</div>
<div style="left:1126.8px;top:457px;width:2.4px;height:333px;background:#5a5a5e;"></div>
<div style="left:1130px;top:457.8px;width:101.6px;height:332px;background:#2a2a2d;"></div>
<div class="t" style="left:1131.8px;top:460.40px;font-size:10px;line-height:14px;color:#e6e6e6;font-weight:400;">Class Hier...</div>
<svg style="position:absolute;left:1188.7px;top:463px;" width="8" height="5" viewBox="0 0 8 5"><path d="M0 0 L8 0 L4 5 Z" fill="#e8e8e8"/></svg>
<svg style="position:absolute;left:1203.7px;top:461.5px;" width="7" height="9" viewBox="0 0 7 9"><path d="M1.5 0.5 H5.5 M2.5 0.5 V5 M4.5 0.5 V5 M0.5 5.5 H6.5 M3.5 5.5 V9" stroke="#e8e8e8" stroke-width="1" fill="none"/></svg>
<svg style="position:absolute;left:1219.7px;top:462px;" width="8" height="8" viewBox="0 0 8 8"><path d="M0.5 0.5 L7.5 7.5 M7.5 0.5 L0.5 7.5" stroke="#e8e8e8" stroke-width="1.3"/></svg>
<div style="left:1130px;top:475px;width:101.6px;height:2px;background:#4a4a4e;"></div>
<div style="left:1131px;top:477px;width:100px;height:313px;background:#29292c;"></div>
<svg style="position:absolute;left:1136.3px;top:481.5px;" width="8" height="7" viewBox="0 0 8 7"><rect x="0" y="0" width="8" height="7" fill="#f2f2f2"/><path d="M1.5 3.5 H6.5" stroke="#222" stroke-width="1.2"/></svg>
<div style="left:1152.3px;top:482.0px;width:6px;height:6px;background:#f2f2f2;"></div>
<div class="t" style="left:1164.4px;top:478.30px;font-size:10.5px;line-height:14px;color:#e6e6e6;font-weight:400;">classes</div>
<div style="left:1155.5px;top:491px;width:1px;height:67px;background:#48484c;"></div>
<div style="left:1178.5px;top:506.4px;width:28px;height:12.2px;background:#3e3e42;"></div>
<div style="left:1155.5px;top:499.2px;width:8px;height:1px;background:#48484c;"></div>
<svg style="position:absolute;left:1163.6px;top:492.2px;" width="14" height="14" viewBox="0 0 14 14"><circle cx="7" cy="7" r="6" fill="#ffbf00" stroke="#ffe060" stroke-width="1.2"/></svg>
<div class="t" style="left:1179.8px;top:492.20px;font-size:10.5px;line-height:14px;color:#e6e6e6;font-weight:400;">bare soil</div>
<div style="left:1155.5px;top:513.98px;width:8px;height:1px;background:#48484c;"></div>
<svg style="position:absolute;left:1163.6px;top:506.98px;" width="14" height="14" viewBox="0 0 14 14"><circle cx="7" cy="7" r="6" fill="#078a74" stroke="#a0f0e0" stroke-width="1.2"/></svg>
<div class="t" style="left:1179.8px;top:506.98px;font-size:10.5px;line-height:14px;color:#e6e6e6;font-weight:400;">forest</div>
<div style="left:1155.5px;top:528.76px;width:8px;height:1px;background:#48484c;"></div>
<svg style="position:absolute;left:1163.6px;top:521.76px;" width="14" height="14" viewBox="0 0 14 14"><circle cx="7" cy="7" r="6" fill="#7ec400" stroke="#c8f080" stroke-width="1.2"/></svg>
<div class="t" style="left:1179.8px;top:521.76px;font-size:10.5px;line-height:14px;color:#e6e6e6;font-weight:400;">grassland</div>
<div style="left:1155.5px;top:543.54px;width:8px;height:1px;background:#48484c;"></div>
<svg style="position:absolute;left:1163.6px;top:536.54px;" width="14" height="14" viewBox="0 0 14 14"><circle cx="7" cy="7" r="6" fill="#8b0029" stroke="#f0a0b0" stroke-width="1.2"/></svg>
<div class="t" style="left:1179.8px;top:536.54px;font-size:10.5px;line-height:14px;color:#e6e6e6;font-weight:400;">urban</div>
<div style="left:1155.5px;top:558.3199999999999px;width:8px;height:1px;background:#48484c;"></div>
<svg style="position:absolute;left:1163.6px;top:551.3199999999999px;" width="14" height="14" viewBox="0 0 14 14"><circle cx="7" cy="7" r="6" fill="#0e6a8c" stroke="#80e0f0" stroke-width="1.2"/></svg>
<div class="t" style="left:1179.8px;top:551.32px;font-size:10.5px;line-height:14px;color:#e6e6e6;font-weight:400;">water</div>
<div style="left:1231.6px;top:457px;width:3px;height:333px;background:#5a5a5e;"></div>
<div style="left:1234.6px;top:457.8px;width:172.4px;height:332px;background:#2a2a2d;"></div>
<div class="t" style="left:1236px;top:460.40px;font-size:10px;line-height:14px;color:#e6e6e6;font-weight:400;">Feature View</div>
<div style="left:1298px;top:465.5px;width:60px;height:2px;background:repeating-linear-gradient(90deg,#66666a 0 1px,transparent 1px 2px)"></div>
<svg style="position:absolute;left:1364px;top:463px;" width="8" height="5" viewBox="0 0 8 5"><path d="M0 0 L8 0 L4 5 Z" fill="#e8e8e8"/></svg>
<svg style="position:absolute;left:1379px;top:461.5px;" width="7" height="9" viewBox="0 0 7 9"><path d="M1.5 0.5 H5.5 M2.5 0.5 V5 M4.5 0.5 V5 M0.5 5.5 H6.5 M3.5 5.5 V9" stroke="#e8e8e8" stroke-width="1" fill="none"/></svg>
<svg style="position:absolute;left:1395px;top:462px;" width="8" height="8" viewBox="0 0 8 8"><path d="M0.5 0.5 L7.5 7.5 M7.5 0.5 L0.5 7.5" stroke="#e8e8e8" stroke-width="1.3"/></svg>
<div style="left:1234.6px;top:475px;width:172.4px;height:18.3px;background:#252528;border-bottom:1.5px solid #58585c;border-top:1px solid #45454a;"></div>
<div class="t" style="left:1239px;top:477.50px;font-size:10.5px;line-height:14px;color:#8a8a8e;font-weight:400;">Search feature</div>
<svg style="position:absolute;left:1390px;top:477px;" width="16" height="16" viewBox="0 0 16 16"><circle cx="9.5" cy="6.5" r="4.8" fill="none" stroke="#1e6ea8" stroke-width="1.8"/><path d="M6 10 L1.5 14.5" stroke="#1e6ea8" stroke-width="2.2"/></svg>
<div style="left:1235px;top:494px;width:157px;height:296px;background:#28282b;"></div>
<div style="left:1392.2px;top:494px;width:13.8px;height:296px;background:#3a3a3e;"></div>
<svg style="position:absolute;left:1394px;top:497px;" width="10" height="7" viewBox="0 0 10 7"><path d="M0 6 L5 1 L10 6 Z" fill="#bcbcc0"/></svg>
<div style="left:1394px;top:564.5px;width:10.7px;height:218.3px;background:#7e7e82;"></div>
<div style="left:1235px;top:494px;width:157px;height:296px;overflow:hidden">
<div style="left:-1235px;top:-494px;width:1407px;height:794px">
<div class="t" style="left:1234.8px;top:496.10px;font-size:10.5px;line-height:14px;color:#e8e8e8;font-weight:400;">hematic layer</div>
<div class="t" style="left:1234.8px;top:510.82px;font-size:10.5px;line-height:14px;color:#e8e8e8;font-weight:400;">oint cloud</div>
<div class="t" style="left:1234.8px;top:525.54px;font-size:10.5px;line-height:14px;color:#e8e8e8;font-weight:400;">lass</div>
<div class="t" style="left:1234.8px;top:540.26px;font-size:10.5px;line-height:14px;color:#e8e8e8;font-weight:400;">elations to objects</div>
<div style="left:1234.5px;top:558.48px;width:3.5px;height:7px;background:#f2f2f2;"></div>
<div class="t" style="left:1243.8px;top:554.98px;font-size:10.5px;line-height:14px;color:#e8e8e8;font-weight:400;">Linked object features</div>
<div style="left:1234.5px;top:573.2px;width:3.5px;height:7px;background:#f2f2f2;"></div>
<div class="t" style="left:1243.8px;top:569.70px;font-size:10.5px;line-height:14px;color:#e8e8e8;font-weight:400;">Neighbors</div>
<div style="left:1234.5px;top:587.9200000000001px;width:3.5px;height:7px;background:#f2f2f2;"></div>
<div class="t" style="left:1243.8px;top:584.42px;font-size:10.5px;line-height:14px;color:#e8e8e8;font-weight:400;">Process features</div>
<div style="left:1234.5px;top:602.64px;width:3.5px;height:7px;background:#f2f2f2;"></div>
<div class="t" style="left:1243.8px;top:599.14px;font-size:10.5px;line-height:14px;color:#e8e8e8;font-weight:400;">Sub-objects</div>
<div style="left:1234.5px;top:617.36px;width:3.5px;height:7px;background:#f2f2f2;"></div>
<div style="left:1247px;top:617.86px;width:6px;height:6px;background:#f2f2f2;"></div>
<div class="t" style="left:1259.1px;top:613.86px;font-size:10.5px;line-height:14px;color:#e8e8e8;font-weight:400;">Layer value texture</div>
<div style="left:1234.5px;top:632.08px;width:3.5px;height:7px;background:#f2f2f2;"></div>
<div style="left:1247px;top:632.58px;width:6px;height:6px;background:#f2f2f2;"></div>
<div class="t" style="left:1259.1px;top:628.58px;font-size:10.5px;line-height:14px;color:#e8e8e8;font-weight:400;">Shape texture</div>
<div style="left:1234.5px;top:646.8000000000001px;width:3.5px;height:7px;background:#f2f2f2;"></div>
<div style="left:1247px;top:647.3000000000001px;width:6px;height:6px;background:#f2f2f2;"></div>
<div class="t" style="left:1259.1px;top:643.30px;font-size:10.5px;line-height:14px;color:#e8e8e8;font-weight:400;">Existence of</div>
<div style="left:1234.5px;top:661.52px;width:3.5px;height:7px;background:#f2f2f2;"></div>
<div style="left:1247px;top:662.02px;width:6px;height:6px;background:#f2f2f2;"></div>
<div class="t" style="left:1259.1px;top:658.02px;font-size:10.5px;line-height:14px;color:#e8e8e8;font-weight:400;">Number of</div>
<div style="left:1234.5px;top:676.24px;width:3.5px;height:7px;background:#f2f2f2;"></div>
<div style="left:1247px;top:676.74px;width:6px;height:6px;background:#f2f2f2;"></div>
<div class="t" style="left:1259.1px;top:672.74px;font-size:10.5px;line-height:14px;color:#e8e8e8;font-weight:400;">Area of</div>
<div style="left:1234.5px;top:690.96px;width:3.5px;height:7px;background:#f2f2f2;"></div>
<div style="left:1247px;top:691.46px;width:6px;height:6px;background:#f2f2f2;"></div>
<div class="t" style="left:1259.1px;top:687.46px;font-size:10.5px;line-height:14px;color:#e8e8e8;font-weight:400;">Rel. area of</div>
<div style="left:1234.5px;top:705.6800000000001px;width:3.5px;height:7px;background:#f2f2f2;"></div>
<div style="left:1247px;top:706.1800000000001px;width:6px;height:6px;background:#f2f2f2;"></div>
<div class="t" style="left:1259.1px;top:702.18px;font-size:10.5px;line-height:14px;color:#e8e8e8;font-weight:400;">Clark Aggregation Index</div>
<div style="left:1234.5px;top:720.4000000000001px;width:3.5px;height:7px;background:#f2f2f2;"></div>
<div style="left:1247px;top:720.9000000000001px;width:6px;height:6px;background:#f2f2f2;"></div>
<div class="t" style="left:1259.1px;top:716.90px;font-size:10.5px;line-height:14px;color:#e8e8e8;font-weight:400;">Majority Vote Area</div>
<div style="left:1234.5px;top:764.5600000000001px;width:3.5px;height:7px;background:#f2f2f2;"></div>
<div style="left:1247px;top:765.0600000000001px;width:6px;height:6px;background:#f2f2f2;"></div>
<div class="t" style="left:1259.1px;top:761.06px;font-size:10.5px;line-height:14px;color:#e8e8e8;font-weight:400;">Majority Vote Count</div>
<div style="left:1251px;top:727.9000000000001px;width:1px;height:22px;background:#505054;"></div>
<div style="left:1251px;top:738.62px;width:10px;height:1px;background:#505054;"></div>
<div style="left:1251px;top:753.34px;width:6px;height:1px;background:#505054;"></div>
<div style="left:1262.5px;top:735.62px;width:6px;height:6px;background:#f2f2f2;"></div>
<div class="t" style="left:1274.2px;top:731.62px;font-size:10.5px;line-height:14px;color:#e8e8e8;font-weight:400;">Create new &#x27;Majority Vote</div>
<div style="left:1272.5px;top:745.6px;width:104.5px;height:14px;background:#3e3e44;"></div>
<svg style="position:absolute;left:1256px;top:745.84px;" width="16" height="15" viewBox="0 0 16 15"><path d="M1.5 1 V14 H15" fill="none" stroke="#8a7a80" stroke-width="1"/><path d="M3 11 L6 8 L8.5 12 L14 3" fill="none" stroke="#d02030" stroke-width="1.5"/></svg>
<div class="t" style="left:1274.2px;top:746.34px;font-size:10.5px;line-height:14px;color:#e8e8e8;font-weight:400;">Majority Vote Area (1)</div>
<div style="left:1251px;top:772.0600000000001px;width:1px;height:12px;background:#505054;"></div>
<div style="left:1251px;top:782.78px;width:10px;height:1px;background:#505054;"></div>
<div style="left:1262.5px;top:779.78px;width:6px;height:6px;background:#f2f2f2;"></div>
<div class="t" style="left:1274.2px;top:775.78px;font-size:10.5px;line-height:14px;color:#e8e8e8;font-weight:400;">Create new &#x27;Majority Vote</div>
</div></div>
<div style="left:2px;top:42px;width:2px;height:26px;background:repeating-linear-gradient(180deg,#5a5a5e 0 1px,transparent 1px 2px)"></div>
<svg style="position:absolute;left:9px;top:44px;" width="21" height="21" viewBox="0 0 21 21"><rect x="0.5" y="0.5" width="18.5" height="4.5" fill="#f0c030"/><path d="M0.5 16 L8 12 L19 15 L11 19.5 Z" fill="#f2f0fa" stroke="#a8a4c0" stroke-width="0.7"/><path d="M0.5 12 L8 8 L19 11 L11 15.5 Z" fill="#f2f0fa" stroke="#a8a4c0" stroke-width="0.7"/><path d="M0.5 8 L8 4 L19 7 L11 11.5 Z" fill="#f2f0fa" stroke="#a8a4c0" stroke-width="0.7"/><circle cx="14" cy="14.5" r="6.5" fill="#1b8fd0"/><path d="M10.5 14.5 H17.5 M14 11 V18" stroke="#fff" stroke-width="1.6"/></svg>
<svg style="position:absolute;left:37.5px;top:44px;" width="21" height="21" viewBox="0 0 21 21"><rect x="0.5" y="0.5" width="18.5" height="4.5" fill="#f0c030"/><path d="M0.5 16 L8 12 L19 15 L11 19.5 Z" fill="#f2f0fa" stroke="#a8a4c0" stroke-width="0.7"/><path d="M0.5 12 L8 8 L19 11 L11 15.5 Z" fill="#f2f0fa" stroke="#a8a4c0" stroke-width="0.7"/><path d="M0.5 8 L8 4 L19 7 L11 11.5 Z" fill="#f2f0fa" stroke="#a8a4c0" stroke-width="0.7"/><circle cx="14" cy="14.5" r="6.5" fill="#1b8fd0"/><rect x="11" y="11.5" width="6" height="6" fill="none" stroke="#c8f0ff" stroke-width="1.2"/><path d="M11 14.5 H17" stroke="#c8f0ff" stroke-width="1"/></svg>
<svg style="position:absolute;left:66px;top:44px;" width="21" height="21" viewBox="0 0 21 21"><rect x="1" y="1" width="18" height="16" fill="#c4c4d0"/><rect x="1" y="1" width="18" height="3" fill="#f4f4f8"/><rect x="3" y="5" width="5" height="11" fill="#f0c030"/><rect x="10" y="5" width="8" height="11" fill="#a8a8c0"/><circle cx="14" cy="14.5" r="6.5" fill="#1b8fd0"/><path d="M10.5 14.5 H17.5 M14 11 V18" stroke="#fff" stroke-width="1.6"/></svg>
<svg style="position:absolute;left:95px;top:44px;" width="21" height="21" viewBox="0 0 21 21"><rect x="1" y="1" width="18" height="16" fill="#c4c4d0"/><rect x="1" y="1" width="18" height="3" fill="#f4f4f8"/><rect x="3" y="6" width="10" height="4" rx="2" fill="#f0c030"/><circle cx="14" cy="14.5" r="6.5" fill="#1b8fd0"/><path d="M10 14.5 H15 M13 12 L15.5 14.5 L13 17 M17 11.5 V17.5" stroke="#fff" stroke-width="1.4" fill="none"/></svg>
<svg style="position:absolute;left:123.4px;top:44px;" width="21" height="21" viewBox="0 0 21 21"><rect x="1" y="1" width="18" height="16" fill="#c4c4d0"/><rect x="1" y="1" width="18" height="3" fill="#f4f4f8"/><rect x="3" y="5" width="5" height="11" fill="#f0c030"/><rect x="10" y="5" width="8" height="11" fill="#a8a8c0"/><circle cx="14" cy="14.5" r="6.5" fill="#1b8fd0"/><path d="M10.5 12 H13 L14 13 H17.5 V17.5 H10.5 Z" fill="#d0f0ff"/></svg>
<div style="left:150.7px;top:43px;width:1px;height:24px;background:#4a4a4e;"></div>
<svg style="position:absolute;left:156.8px;top:44px;" width="22" height="21" viewBox="0 0 22 21"><path d="M1 6 L9 2 L17 6 L9 10 Z M1 9 L9 5 L17 9 L9 13 Z M1 12 L9 8 L17 12 L9 16 Z" fill="#ece8f4" stroke="#b8b4c8" stroke-width="0.6"/><circle cx="15" cy="14" r="6" fill="#f0c020"/><circle cx="15" cy="14" r="3" fill="none" stroke="#c89000" stroke-width="0.8"/></svg>
<div style="left:181.9px;top:40px;width:29.5px;height:29px;background:#2a2b30;border:1px solid #2c3848;"></div>
<svg style="position:absolute;left:185.8px;top:44px;" width="22" height="21" viewBox="0 0 22 21"><rect x="1" y="1" width="18" height="4" rx="2" fill="#e4e4ec"/><rect x="3" y="8" width="14" height="4" rx="2" fill="#c8c8d4"/><rect x="3" y="14" width="10" height="4" rx="2" fill="#b8b8c8"/><circle cx="15" cy="14" r="6" fill="#f0c020"/><circle cx="15" cy="14" r="3" fill="none" stroke="#c89000" stroke-width="0.8"/></svg>
<div style="left:212px;top:40px;width:33px;height:29px;background:#2a2b30;border:1px solid #2c3848;"></div>
<svg style="position:absolute;left:223px;top:44px;" width="14" height="22" viewBox="0 0 14 22"><path d="M2 1 L2 16 L5.5 12.5 L9 20 L11.5 19 L8 11.5 L13 11.5 Z" fill="#f0f0f8"/></svg>
<svg style="position:absolute;left:249px;top:44px;" width="19" height="21" viewBox="0 0 19 21"><path d="M5.5 20 C3.5 18 1.8 15.5 1 12.8 C0.6 11.2 2.6 10.4 3.6 11.8 L4.8 13.5 L4.8 5 C4.8 3.2 7.3 3.2 7.3 5 L7.3 10.5 L7.3 3 C7.3 1.2 10 1.2 10 3 L10 10.5 L10 3.8 C10 2 12.6 2 12.6 3.8 L12.6 10.8 L12.6 6.2 C12.6 4.6 15.2 4.6 15.2 6.2 L15.2 13.5 C15.2 17.5 13 20 10 20 Z" fill="#2a2846" stroke="#f0f0f8" stroke-width="1.3" stroke-linejoin="round"/></svg>
<div style="left:276.8px;top:43px;width:1px;height:24px;background:#4a4a4e;"></div>
<svg style="position:absolute;left:282.5px;top:44px;" width="22" height="21" viewBox="0 0 22 21"><path d="M6 9 V6 A5 5 0 0 1 16 6 V9" fill="none" stroke="#f0f0f0" stroke-width="2"/><rect x="3" y="9" width="17" height="11" fill="#d0d0d8"/><rect x="3" y="9" width="17" height="4" fill="#e8e8f0"/><path d="M2 8 L5 8 M18 19 L21 21" stroke="#d02030" stroke-width="2"/></svg>
<svg style="position:absolute;left:313px;top:45px;" width="20" height="20" viewBox="0 0 20 20"><circle cx="10" cy="9.8" r="8.6" fill="none" stroke="#f0f0f0" stroke-width="1.6"/><path d="M5.5 9.8 H14.5" stroke="#f0f0f0" stroke-width="1.6"/></svg>
<svg style="position:absolute;left:342px;top:45px;" width="20" height="20" viewBox="0 0 20 20"><circle cx="10" cy="9.8" r="8.6" fill="none" stroke="#f0f0f0" stroke-width="1.6"/><path d="M5.5 9.8 H14.5 M10 5.3 V14.3" stroke="#f0f0f0" stroke-width="1.6"/></svg>
<div style="left:366.5px;top:44.8px;width:63.2px;height:19px;background:#2e2e32;border:1px solid #38383c;"></div>
<div class="t" style="left:370.5px;top:48.20px;font-size:10px;line-height:14px;color:#d8d8d8;font-weight:400;">50%</div>
<svg style="position:absolute;left:420.5px;top:52.5px;" width="5" height="4" viewBox="0 0 5 4"><path d="M0 0 L5 0 L2.5 3.5 Z" fill="#9a9a9e"/></svg>
<svg style="position:absolute;left:434.8px;top:44px;" width="22" height="22" viewBox="0 0 22 22"><circle cx="10.5" cy="10.5" r="3.6" fill="none" stroke="#f0f0f0" stroke-width="1.8"/><path d="M13 13 L16.5 16.5" stroke="#f0f0f0" stroke-width="2"/><path d="M10.5 1 L8 4 H13 Z M10.5 21 L8 18 H13 Z M1 10.5 L4 8 V13 Z M21 10.5 L18 8 V13 Z" fill="#f0f0f0"/><path d="M10.5 3 V6 M10.5 15 V19 M3 10.5 H6 M15 10.5 H19" stroke="#f0f0f0" stroke-width="1"/></svg>
<div style="left:463.5px;top:43px;width:1px;height:24px;background:#4a4a4e;"></div>
<div style="left:465.8px;top:46.5px;width:71px;height:17px;background:#2e2e32;border:1px solid #38383c;"></div>
<div style="left:520px;top:47.5px;width:16px;height:15px;background:#2a2a2d;"></div>
<div class="t" style="left:470.4px;top:48.00px;font-size:10.5px;line-height:14px;color:#ececec;font-weight:400;">main</div>
<svg style="position:absolute;left:525.5px;top:53.5px;" width="5" height="4" viewBox="0 0 5 4"><path d="M0 0 L5 0 L2.5 3.5 Z" fill="#9a9a9e"/></svg>
<div style="left:539px;top:41px;width:1.5px;height:28px;background:repeating-linear-gradient(180deg,#707074 0 1px,transparent 1px 2px)"></div>
<svg style="position:absolute;left:544.9px;top:44.5px;" width="22" height="20" viewBox="0 0 22 20"><rect x="1" y="1" width="20" height="18" fill="#c0c0d0"/><rect x="1" y="1" width="20" height="3" fill="#f4f4f8"/><rect x="2" y="4" width="9" height="14" fill="#e8c040"/><rect x="11" y="4" width="2" height="14" fill="#8a8aa0"/></svg>
<div style="left:573.9px;top:43px;width:1px;height:24px;background:#4a4a4e;"></div>
<div style="left:575.6px;top:40.5px;width:29px;height:28.5px;background:#2a2a2e;border:1px solid #2c3848;"></div>
<div style="left:605px;top:40.5px;width:29px;height:28.5px;background:#2a2a2e;border:1px solid #2c3848;"></div>
<div style="left:634px;top:40.5px;width:29px;height:28.5px;background:#2a2a2e;border:1px solid #2c3848;"></div>
<div style="left:663px;top:40.5px;width:29px;height:28.5px;background:#2a2a2e;border:1px solid #2c3848;"></div>
<div style="left:692px;top:40.5px;width:29px;height:28.5px;background:#2a2a2e;border:1px solid #2c3848;"></div>
<div style="left:720.6px;top:40.5px;width:29px;height:28.5px;background:#2a2a2e;border:1px solid #2c3848;"></div>
<svg style="position:absolute;left:580.7px;top:44px;" width="20" height="20" viewBox="0 0 20 20"><rect x="1" y="1" width="18" height="4" rx="2" fill="#e8e8f0"/><rect x="2" y="8" width="17" height="4" rx="2" fill="#c8c8d4"/><rect x="2" y="14" width="17" height="4" rx="2" fill="#b8b8c8"/><rect x="5" y="8" width="2" height="10" fill="#fff"/></svg>
<svg style="position:absolute;left:609.7px;top:44px;" width="22" height="21" viewBox="0 0 22 21"><path d="M1 8 C3 3 10 1 17 2 C19 3 17 6 13 7 C16 8 19 8 20 9 C18 12 14 11 11 11 C8 12 3 12 1 10 Z" fill="#f5c000"/><circle cx="14.5" cy="15" r="6" fill="#1b8fd0"/><path d="M14.8 12.5 V18.5" stroke="#fff" stroke-width="1.8"/><circle cx="15.2" cy="10.8" r="1" fill="#fff"/></svg>
<svg style="position:absolute;left:638px;top:44px;" width="22" height="21" viewBox="0 0 22 21"><rect x="1" y="1" width="19" height="18" fill="none" stroke="#f4f4f4" stroke-width="1.8"/><path d="M2 6 H19 M2 10 H19 M2 14 H19" stroke="#f4f4f4" stroke-width="1.2"/><path d="M4 8 L13 6 L11 10 L15 9 L12 13 L5 12 Z" fill="#f5c000"/><circle cx="15" cy="15" r="6" fill="#1b8fd0"/><path d="M15.3 12.5 V18.5" stroke="#fff" stroke-width="1.8"/><circle cx="15.7" cy="10.8" r="1" fill="#fff"/></svg>
<svg style="position:absolute;left:667px;top:44px;" width="22" height="21" viewBox="0 0 22 21"><path d="M1 8 C3 3 10 1 17 2 C19 3 17 6 13 7 C16 8 19 8 20 9 C18 12 14 11 11 11 C8 12 3 12 1 10 Z" fill="#f5c000"/><path d="M2 10 H20 M3 10 C3 16 9 16 9 10 M13 10 C13 16 19 16 19 10" fill="none" stroke="#f4f4f4" stroke-width="1.5"/><path d="M12 12 L13 18 L16 12" fill="#f5c000"/></svg>
<svg style="position:absolute;left:698.5px;top:44px;" width="16" height="21" viewBox="0 0 16 21"><path d="M5 6 V17 M5 10 H10 M5 17 H10" stroke="#c0c0c8" stroke-width="1.2"/><circle cx="5" cy="5" r="3.5" fill="#f0c030"/><circle cx="11" cy="10.5" r="3.5" fill="#a8a8b8"/><circle cx="11" cy="17" r="3.5" fill="#a8a8b8"/></svg>
<svg style="position:absolute;left:724.6px;top:44px;" width="22" height="21" viewBox="0 0 22 21"><path d="M1 9 C5 2 15 2 19 9 C15 16 5 16 1 9 Z" fill="#f4f4f8"/><circle cx="10" cy="9" r="4.5" fill="#1a1a24"/><circle cx="15" cy="14" r="6.5" fill="#1b8fd0"/><circle cx="15" cy="14" r="3" fill="none" stroke="#d0f0ff" stroke-width="1.6" stroke-dasharray="1.5 1"/></svg>
<svg style="position:absolute;left:753.7px;top:44px;" width="21" height="21" viewBox="0 0 21 21"><path d="M1.5 17 V1.5 H19 V17" fill="none" stroke="#f4f4f4" stroke-width="1.8"/><rect x="1.5" y="1.5" width="17.5" height="2.5" fill="#f4f4f4"/><circle cx="9.5" cy="10.5" r="4.5" fill="none" stroke="#f4f4f4" stroke-width="2"/><path d="M13 14 L17.5 18.5" stroke="#f4f4f4" stroke-width="2.2"/></svg>
<div style="left:781.5px;top:43px;width:1px;height:24px;background:#4a4a4e;"></div>
<svg style="position:absolute;left:789.5px;top:44.5px;" width="21" height="20" viewBox="0 0 21 20"><rect x="1" y="1" width="4.5" height="4.5" fill="#eee"/><rect x="7.5" y="1" width="4.5" height="4.5" fill="#eee"/><rect x="14" y="1" width="4.5" height="4.5" fill="#eee"/><rect x="1" y="8" width="4.5" height="4.5" fill="#eee"/><rect x="1" y="14.5" width="4.5" height="4.5" fill="#eee"/><rect x="7" y="7.5" width="12" height="12" fill="#1b8fd0"/><circle cx="13" cy="13.5" r="3" fill="none" stroke="#d0f0ff" stroke-width="1.6" stroke-dasharray="1.5 1"/></svg>
<svg style="position:absolute;left:817.4px;top:44px;" width="22" height="22" viewBox="0 0 22 22"><path d="M3 18 C4 10 7 4 13 3" fill="none" stroke="#d8d8e8" stroke-width="1.6"/><circle cx="3" cy="18" r="1.8" fill="#c02030"/><circle cx="13" cy="3" r="1.8" fill="#c02030"/><circle cx="19" cy="3" r="1.8" fill="#c02030"/><circle cx="14.5" cy="14.5" r="6.5" fill="#1b8fd0"/><path d="M11.5 17.5 L17.5 11.5" stroke="#fff" stroke-width="1.6"/></svg>
<div style="left:441px;top:70px;width:2.5px;height:720px;background:#252527;"></div>
<div style="left:443.5px;top:70px;width:2px;height:720px;background:#606064;"></div>
<div style="left:445.5px;top:70px;width:498.7px;height:720px;background:#000;"></div>
<div style="left:944px;top:70px;width:2px;height:720px;background:#505055;"></div>
<svg style="position:absolute;left:446px;top:161px;" width="498" height="629.5" viewBox="0 0 498 629.5"><rect x="0.00" y="0.00" width="33.36" height="33.36" fill="#056a88"/><rect x="32.76" y="0.00" width="33.36" height="33.36" fill="#056a88"/><rect x="65.32" y="0.00" width="33.36" height="33.36" fill="#056a88"/><rect x="97.88" y="0.00" width="33.36" height="33.36" fill="#056a88"/><rect x="130.44" y="0.00" width="33.36" height="33.36" fill="#06806e"/><rect x="163.00" y="0.00" width="33.36" height="33.36" fill="#06806e"/><rect x="195.56" y="0.00" width="33.36" height="33.36" fill="#86c000"/><rect x="228.12" y="0.00" width="33.36" height="33.36" fill="#86c000"/><rect x="260.68" y="0.00" width="33.36" height="33.36" fill="#86c000"/><rect x="293.24" y="0.00" width="33.36" height="33.36" fill="#86c000"/><rect x="325.80" y="0.00" width="33.36" height="33.36" fill="#86c000"/><rect x="358.36" y="0.00" width="33.36" height="33.36" fill="#86c000"/><rect x="390.92" y="0.00" width="33.36" height="33.36" fill="#06806e"/><rect x="423.48" y="0.00" width="33.36" height="33.36" fill="#86c000"/><rect x="456.04" y="0.00" width="33.36" height="33.36" fill="#86c000"/><rect x="488.60" y="0.00" width="33.36" height="33.36" fill="#86c000"/><rect x="0.00" y="33.06" width="33.36" height="33.36" fill="#056a88"/><rect x="32.76" y="33.06" width="33.36" height="33.36" fill="#056a88"/><rect x="65.32" y="33.06" width="33.36" height="33.36" fill="#056a88"/><rect x="97.88" y="33.06" width="33.36" height="33.36" fill="#056a88"/><rect x="130.44" y="33.06" width="33.36" height="33.36" fill="#06806e"/><rect x="163.00" y="33.06" width="33.36" height="33.36" fill="#06806e"/><rect x="195.56" y="33.06" width="33.36" height="33.36" fill="#06806e"/><rect x="228.12" y="33.06" width="33.36" height="33.36" fill="#86c000"/><rect x="260.68" y="33.06" width="33.36" height="33.36" fill="#86c000"/><rect x="293.24" y="33.06" width="33.36" height="33.36" fill="#86c000"/><rect x="325.80" y="33.06" width="33.36" height="33.36" fill="#86c000"/><rect x="358.36" y="33.06" width="33.36" height="33.36" fill="#06806e"/><rect x="390.92" y="33.06" width="33.36" height="33.36" fill="#86c000"/><rect x="423.48" y="33.06" width="33.36" height="33.36" fill="#86c000"/><rect x="456.04" y="33.06" width="33.36" height="33.36" fill="#86c000"/><rect x="488.60" y="33.06" width="33.36" height="33.36" fill="#86c000"/><rect x="0.00" y="65.62" width="33.36" height="33.36" fill="#056a88"/><rect x="32.76" y="65.62" width="33.36" height="33.36" fill="#056a88"/><rect x="65.32" y="65.62" width="33.36" height="33.36" fill="#056a88"/><rect x="97.88" y="65.62" width="33.36" height="33.36" fill="#06806e"/><rect x="130.44" y="65.62" width="33.36" height="33.36" fill="#06806e"/><rect x="163.00" y="65.62" width="33.36" height="33.36" fill="#86c000"/><rect x="195.56" y="65.62" width="33.36" height="33.36" fill="#06806e"/><rect x="228.12" y="65.62" width="33.36" height="33.36" fill="#86c000"/><rect x="260.68" y="65.62" width="33.36" height="33.36" fill="#86c000"/><rect x="293.24" y="65.62" width="33.36" height="33.36" fill="#86c000"/><rect x="325.80" y="65.62" width="33.36" height="33.36" fill="#06806e"/><rect x="358.36" y="65.62" width="33.36" height="33.36" fill="#06806e"/><rect x="390.92" y="65.62" width="33.36" height="33.36" fill="#86c000"/><rect x="423.48" y="65.62" width="33.36" height="33.36" fill="#86c000"/><rect x="456.04" y="65.62" width="33.36" height="33.36" fill="#86c000"/><rect x="488.60" y="65.62" width="33.36" height="33.36" fill="#86c000"/><rect x="0.00" y="98.18" width="33.36" height="33.36" fill="#056a88"/><rect x="32.76" y="98.18" width="33.36" height="33.36" fill="#056a88"/><rect x="65.32" y="98.18" width="33.36" height="33.36" fill="#056a88"/><rect x="97.88" y="98.18" width="33.36" height="33.36" fill="#06806e"/><rect x="130.44" y="98.18" width="33.36" height="33.36" fill="#06806e"/><rect x="163.00" y="98.18" width="33.36" height="33.36" fill="#86c000"/><rect x="195.56" y="98.18" width="33.36" height="33.36" fill="#06806e"/><rect x="228.12" y="98.18" width="33.36" height="33.36" fill="#86c000"/><rect x="260.68" y="98.18" width="33.36" height="33.36" fill="#86c000"/><rect x="293.24" y="98.18" width="33.36" height="33.36" fill="#86c000"/><rect x="325.80" y="98.18" width="33.36" height="33.36" fill="#06806e"/><rect x="358.36" y="98.18" width="33.36" height="33.36" fill="#86c000"/><rect x="390.92" y="98.18" width="33.36" height="33.36" fill="#86c000"/><rect x="423.48" y="98.18" width="33.36" height="33.36" fill="#06806e"/><rect x="456.04" y="98.18" width="33.36" height="33.36" fill="#86c000"/><rect x="488.60" y="98.18" width="33.36" height="33.36" fill="#86c000"/><rect x="0.00" y="130.74" width="33.36" height="33.36" fill="#056a88"/><rect x="32.76" y="130.74" width="33.36" height="33.36" fill="#056a88"/><rect x="65.32" y="130.74" width="33.36" height="33.36" fill="#06806e"/><rect x="97.88" y="130.74" width="33.36" height="33.36" fill="#06806e"/><rect x="130.44" y="130.74" width="33.36" height="33.36" fill="#06806e"/><rect x="163.00" y="130.74" width="33.36" height="33.36" fill="#06806e"/><rect x="195.56" y="130.74" width="33.36" height="33.36" fill="#06806e"/><rect x="228.12" y="130.74" width="33.36" height="33.36" fill="#06806e"/><rect x="260.68" y="130.74" width="33.36" height="33.36" fill="#06806e"/><rect x="293.24" y="130.74" width="33.36" height="33.36" fill="#86c000"/><rect x="325.80" y="130.74" width="33.36" height="33.36" fill="#86c000"/><rect x="358.36" y="130.74" width="33.36" height="33.36" fill="#86c000"/><rect x="390.92" y="130.74" width="33.36" height="33.36" fill="#06806e"/><rect x="423.48" y="130.74" width="33.36" height="33.36" fill="#06806e"/><rect x="456.04" y="130.74" width="33.36" height="33.36" fill="#06806e"/><rect x="488.60" y="130.74" width="33.36" height="33.36" fill="#06806e"/><rect x="0.00" y="163.30" width="33.36" height="33.36" fill="#06806e"/><rect x="32.76" y="163.30" width="33.36" height="33.36" fill="#06806e"/><rect x="65.32" y="163.30" width="33.36" height="33.36" fill="#06806e"/><rect x="97.88" y="163.30" width="33.36" height="33.36" fill="#06806e"/><rect x="130.44" y="163.30" width="33.36" height="33.36" fill="#06806e"/><rect x="163.00" y="163.30" width="33.36" height="33.36" fill="#06806e"/><rect x="195.56" y="163.30" width="33.36" height="33.36" fill="#06806e"/><rect x="228.12" y="163.30" width="33.36" height="33.36" fill="#06806e"/><rect x="260.68" y="163.30" width="33.36" height="33.36" fill="#86c000"/><rect x="293.24" y="163.30" width="33.36" height="33.36" fill="#06806e"/><rect x="325.80" y="163.30" width="33.36" height="33.36" fill="#06806e"/><rect x="358.36" y="163.30" width="33.36" height="33.36" fill="#06806e"/><rect x="390.92" y="163.30" width="33.36" height="33.36" fill="#86c000"/><rect x="423.48" y="163.30" width="33.36" height="33.36" fill="#06806e"/><rect x="456.04" y="163.30" width="33.36" height="33.36" fill="#06806e"/><rect x="488.60" y="163.30" width="33.36" height="33.36" fill="#06806e"/><rect x="0.00" y="195.86" width="33.36" height="33.36" fill="#06806e"/><rect x="32.76" y="195.86" width="33.36" height="33.36" fill="#06806e"/><rect x="65.32" y="195.86" width="33.36" height="33.36" fill="#06806e"/><rect x="97.88" y="195.86" width="33.36" height="33.36" fill="#06806e"/><rect x="130.44" y="195.86" width="33.36" height="33.36" fill="#06806e"/><rect x="163.00" y="195.86" width="33.36" height="33.36" fill="#06806e"/><rect x="195.56" y="195.86" width="33.36" height="33.36" fill="#06806e"/><rect x="228.12" y="195.86" width="33.36" height="33.36" fill="#06806e"/><rect x="260.68" y="195.86" width="33.36" height="33.36" fill="#06806e"/><rect x="293.24" y="195.86" width="33.36" height="33.36" fill="#86c000"/><rect x="325.80" y="195.86" width="33.36" height="33.36" fill="#06806e"/><rect x="358.36" y="195.86" width="33.36" height="33.36" fill="#06806e"/><rect x="390.92" y="195.86" width="33.36" height="33.36" fill="#06806e"/><rect x="423.48" y="195.86" width="33.36" height="33.36" fill="#06806e"/><rect x="456.04" y="195.86" width="33.36" height="33.36" fill="#06806e"/><rect x="488.60" y="195.86" width="33.36" height="33.36" fill="#86c000"/><rect x="0.00" y="228.42" width="33.36" height="33.36" fill="#06806e"/><rect x="32.76" y="228.42" width="33.36" height="33.36" fill="#86c000"/><rect x="65.32" y="228.42" width="33.36" height="33.36" fill="#06806e"/><rect x="97.88" y="228.42" width="33.36" height="33.36" fill="#06806e"/><rect x="130.44" y="228.42" width="33.36" height="33.36" fill="#06806e"/><rect x="163.00" y="228.42" width="33.36" height="33.36" fill="#86c000"/><rect x="195.56" y="228.42" width="33.36" height="33.36" fill="#86c000"/><rect x="228.12" y="228.42" width="33.36" height="33.36" fill="#86c000"/><rect x="260.68" y="228.42" width="33.36" height="33.36" fill="#06806e"/><rect x="293.24" y="228.42" width="33.36" height="33.36" fill="#06806e"/><rect x="325.80" y="228.42" width="33.36" height="33.36" fill="#06806e"/><rect x="358.36" y="228.42" width="33.36" height="33.36" fill="#06806e"/><rect x="390.92" y="228.42" width="33.36" height="33.36" fill="#06806e"/><rect x="423.48" y="228.42" width="33.36" height="33.36" fill="#06806e"/><rect x="456.04" y="228.42" width="33.36" height="33.36" fill="#06806e"/><rect x="488.60" y="228.42" width="33.36" height="33.36" fill="#06806e"/><rect x="0.00" y="260.98" width="33.36" height="33.36" fill="#06806e"/><rect x="32.76" y="260.98" width="33.36" height="33.36" fill="#06806e"/><rect x="65.32" y="260.98" width="33.36" height="33.36" fill="#06806e"/><rect x="97.88" y="260.98" width="33.36" height="33.36" fill="#06806e"/><rect x="130.44" y="260.98" width="33.36" height="33.36" fill="#06806e"/><rect x="163.00" y="260.98" width="33.36" height="33.36" fill="#86c000"/><rect x="195.56" y="260.98" width="33.36" height="33.36" fill="#86c000"/><rect x="228.12" y="260.98" width="33.36" height="33.36" fill="#06806e"/><rect x="260.68" y="260.98" width="33.36" height="33.36" fill="#86c000"/><rect x="293.24" y="260.98" width="33.36" height="33.36" fill="#06806e"/><rect x="325.80" y="260.98" width="33.36" height="33.36" fill="#06806e"/><rect x="358.36" y="260.98" width="33.36" height="33.36" fill="#86c000"/><rect x="390.92" y="260.98" width="33.36" height="33.36" fill="#06806e"/><rect x="423.48" y="260.98" width="33.36" height="33.36" fill="#06806e"/><rect x="456.04" y="260.98" width="33.36" height="33.36" fill="#06806e"/><rect x="488.60" y="260.98" width="33.36" height="33.36" fill="#06806e"/><rect x="0.00" y="293.54" width="33.36" height="33.36" fill="#06806e"/><rect x="32.76" y="293.54" width="33.36" height="33.36" fill="#06806e"/><rect x="65.32" y="293.54" width="33.36" height="33.36" fill="#06806e"/><rect x="97.88" y="293.54" width="33.36" height="33.36" fill="#06806e"/><rect x="130.44" y="293.54" width="33.36" height="33.36" fill="#06806e"/><rect x="163.00" y="293.54" width="33.36" height="33.36" fill="#86c000"/><rect x="195.56" y="293.54" width="33.36" height="33.36" fill="#86c000"/><rect x="228.12" y="293.54" width="33.36" height="33.36" fill="#06806e"/><rect x="260.68" y="293.54" width="33.36" height="33.36" fill="#06806e"/><rect x="293.24" y="293.54" width="33.36" height="33.36" fill="#06806e"/><rect x="325.80" y="293.54" width="33.36" height="33.36" fill="#86c000"/><rect x="358.36" y="293.54" width="33.36" height="33.36" fill="#86c000"/><rect x="390.92" y="293.54" width="33.36" height="33.36" fill="#06806e"/><rect x="423.48" y="293.54" width="33.36" height="33.36" fill="#06806e"/><rect x="456.04" y="293.54" width="33.36" height="33.36" fill="#06806e"/><rect x="488.60" y="293.54" width="33.36" height="33.36" fill="#06806e"/><rect x="0.00" y="326.10" width="33.36" height="33.36" fill="#06806e"/><rect x="32.76" y="326.10" width="33.36" height="33.36" fill="#06806e"/><rect x="65.32" y="326.10" width="33.36" height="33.36" fill="#86c000"/><rect x="97.88" y="326.10" width="33.36" height="33.36" fill="#86c000"/><rect x="130.44" y="326.10" width="33.36" height="33.36" fill="#86c000"/><rect x="163.00" y="326.10" width="33.36" height="33.36" fill="#06806e"/><rect x="195.56" y="326.10" width="33.36" height="33.36" fill="#86c000"/><rect x="228.12" y="326.10" width="33.36" height="33.36" fill="#06806e"/><rect x="260.68" y="326.10" width="33.36" height="33.36" fill="#86c000"/><rect x="293.24" y="326.10" width="33.36" height="33.36" fill="#86c000"/><rect x="325.80" y="326.10" width="33.36" height="33.36" fill="#86c000"/><rect x="358.36" y="326.10" width="33.36" height="33.36" fill="#86c000"/><rect x="390.92" y="326.10" width="33.36" height="33.36" fill="#06806e"/><rect x="423.48" y="326.10" width="33.36" height="33.36" fill="#06806e"/><rect x="456.04" y="326.10" width="33.36" height="33.36" fill="#06806e"/><rect x="488.60" y="326.10" width="33.36" height="33.36" fill="#06806e"/><rect x="0.00" y="358.66" width="33.36" height="33.36" fill="#86c000"/><rect x="32.76" y="358.66" width="33.36" height="33.36" fill="#06806e"/><rect x="65.32" y="358.66" width="33.36" height="33.36" fill="#06806e"/><rect x="97.88" y="358.66" width="33.36" height="33.36" fill="#06806e"/><rect x="130.44" y="358.66" width="33.36" height="33.36" fill="#06806e"/><rect x="163.00" y="358.66" width="33.36" height="33.36" fill="#06806e"/><rect x="195.56" y="358.66" width="33.36" height="33.36" fill="#06806e"/><rect x="228.12" y="358.66" width="33.36" height="33.36" fill="#86c000"/><rect x="260.68" y="358.66" width="33.36" height="33.36" fill="#86c000"/><rect x="293.24" y="358.66" width="33.36" height="33.36" fill="#06806e"/><rect x="325.80" y="358.66" width="33.36" height="33.36" fill="#06806e"/><rect x="358.36" y="358.66" width="33.36" height="33.36" fill="#86c000"/><rect x="390.92" y="358.66" width="33.36" height="33.36" fill="#06806e"/><rect x="423.48" y="358.66" width="33.36" height="33.36" fill="#06806e"/><rect x="456.04" y="358.66" width="33.36" height="33.36" fill="#06806e"/><rect x="488.60" y="358.66" width="33.36" height="33.36" fill="#06806e"/><rect x="0.00" y="391.22" width="33.36" height="33.36" fill="#86c000"/><rect x="32.76" y="391.22" width="33.36" height="33.36" fill="#06806e"/><rect x="65.32" y="391.22" width="33.36" height="33.36" fill="#86c000"/><rect x="97.88" y="391.22" width="33.36" height="33.36" fill="#06806e"/><rect x="130.44" y="391.22" width="33.36" height="33.36" fill="#06806e"/><rect x="163.00" y="391.22" width="33.36" height="33.36" fill="#06806e"/><rect x="195.56" y="391.22" width="33.36" height="33.36" fill="#06806e"/><rect x="228.12" y="391.22" width="33.36" height="33.36" fill="#06806e"/><rect x="260.68" y="391.22" width="33.36" height="33.36" fill="#06806e"/><rect x="293.24" y="391.22" width="33.36" height="33.36" fill="#06806e"/><rect x="325.80" y="391.22" width="33.36" height="33.36" fill="#06806e"/><rect x="358.36" y="391.22" width="33.36" height="33.36" fill="#86c000"/><rect x="390.92" y="391.22" width="33.36" height="33.36" fill="#06806e"/><rect x="423.48" y="391.22" width="33.36" height="33.36" fill="#86c000"/><rect x="456.04" y="391.22" width="33.36" height="33.36" fill="#06806e"/><rect x="488.60" y="391.22" width="33.36" height="33.36" fill="#06806e"/><rect x="0.00" y="423.78" width="33.36" height="33.36" fill="#86c000"/><rect x="32.76" y="423.78" width="33.36" height="33.36" fill="#06806e"/><rect x="65.32" y="423.78" width="33.36" height="33.36" fill="#06806e"/><rect x="97.88" y="423.78" width="33.36" height="33.36" fill="#06806e"/><rect x="130.44" y="423.78" width="33.36" height="33.36" fill="#06806e"/><rect x="163.00" y="423.78" width="33.36" height="33.36" fill="#06806e"/><rect x="195.56" y="423.78" width="33.36" height="33.36" fill="#06806e"/><rect x="228.12" y="423.78" width="33.36" height="33.36" fill="#06806e"/><rect x="260.68" y="423.78" width="33.36" height="33.36" fill="#06806e"/><rect x="293.24" y="423.78" width="33.36" height="33.36" fill="#06806e"/><rect x="325.80" y="423.78" width="33.36" height="33.36" fill="#06806e"/><rect x="358.36" y="423.78" width="33.36" height="33.36" fill="#06806e"/><rect x="390.92" y="423.78" width="33.36" height="33.36" fill="#86c000"/><rect x="423.48" y="423.78" width="33.36" height="33.36" fill="#06806e"/><rect x="456.04" y="423.78" width="33.36" height="33.36" fill="#06806e"/><rect x="488.60" y="423.78" width="33.36" height="33.36" fill="#06806e"/><rect x="0.00" y="456.34" width="33.36" height="33.36" fill="#86c000"/><rect x="32.76" y="456.34" width="33.36" height="33.36" fill="#06806e"/><rect x="65.32" y="456.34" width="33.36" height="33.36" fill="#06806e"/><rect x="97.88" y="456.34" width="33.36" height="33.36" fill="#86c000"/><rect x="130.44" y="456.34" width="33.36" height="33.36" fill="#06806e"/><rect x="163.00" y="456.34" width="33.36" height="33.36" fill="#86c000"/><rect x="195.56" y="456.34" width="33.36" height="33.36" fill="#06806e"/><rect x="228.12" y="456.34" width="33.36" height="33.36" fill="#06806e"/><rect x="260.68" y="456.34" width="33.36" height="33.36" fill="#06806e"/><rect x="293.24" y="456.34" width="33.36" height="33.36" fill="#06806e"/><rect x="325.80" y="456.34" width="33.36" height="33.36" fill="#06806e"/><rect x="358.36" y="456.34" width="33.36" height="33.36" fill="#06806e"/><rect x="390.92" y="456.34" width="33.36" height="33.36" fill="#86c000"/><rect x="423.48" y="456.34" width="33.36" height="33.36" fill="#06806e"/><rect x="456.04" y="456.34" width="33.36" height="33.36" fill="#06806e"/><rect x="488.60" y="456.34" width="33.36" height="33.36" fill="#06806e"/><rect x="0.00" y="488.90" width="33.36" height="33.36" fill="#86c000"/><rect x="32.76" y="488.90" width="33.36" height="33.36" fill="#86c000"/><rect x="65.32" y="488.90" width="33.36" height="33.36" fill="#06806e"/><rect x="97.88" y="488.90" width="33.36" height="33.36" fill="#86c000"/><rect x="130.44" y="488.90" width="33.36" height="33.36" fill="#86c000"/><rect x="163.00" y="488.90" width="33.36" height="33.36" fill="#86c000"/><rect x="195.56" y="488.90" width="33.36" height="33.36" fill="#86c000"/><rect x="228.12" y="488.90" width="33.36" height="33.36" fill="#06806e"/><rect x="260.68" y="488.90" width="33.36" height="33.36" fill="#06806e"/><rect x="293.24" y="488.90" width="33.36" height="33.36" fill="#06806e"/><rect x="325.80" y="488.90" width="33.36" height="33.36" fill="#06806e"/><rect x="358.36" y="488.90" width="33.36" height="33.36" fill="#06806e"/><rect x="390.92" y="488.90" width="33.36" height="33.36" fill="#86c000"/><rect x="423.48" y="488.90" width="33.36" height="33.36" fill="#06806e"/><rect x="456.04" y="488.90" width="33.36" height="33.36" fill="#06806e"/><rect x="488.60" y="488.90" width="33.36" height="33.36" fill="#82002a"/><rect x="0.00" y="521.46" width="33.36" height="33.36" fill="#86c000"/><rect x="32.76" y="521.46" width="33.36" height="33.36" fill="#86c000"/><rect x="65.32" y="521.46" width="33.36" height="33.36" fill="#ffc000"/><rect x="97.88" y="521.46" width="33.36" height="33.36" fill="#ffc000"/><rect x="130.44" y="521.46" width="33.36" height="33.36" fill="#86c000"/><rect x="163.00" y="521.46" width="33.36" height="33.36" fill="#82002a"/><rect x="195.56" y="521.46" width="33.36" height="33.36" fill="#86c000"/><rect x="228.12" y="521.46" width="33.36" height="33.36" fill="#06806e"/><rect x="260.68" y="521.46" width="33.36" height="33.36" fill="#06806e"/><rect x="293.24" y="521.46" width="33.36" height="33.36" fill="#06806e"/><rect x="325.80" y="521.46" width="33.36" height="33.36" fill="#06806e"/><rect x="358.36" y="521.46" width="33.36" height="33.36" fill="#06806e"/><rect x="390.92" y="521.46" width="33.36" height="33.36" fill="#06806e"/><rect x="423.48" y="521.46" width="33.36" height="33.36" fill="#06806e"/><rect x="456.04" y="521.46" width="33.36" height="33.36" fill="#06806e"/><rect x="488.60" y="521.46" width="33.36" height="33.36" fill="#82002a"/><rect x="0.00" y="554.02" width="33.36" height="33.36" fill="#86c000"/><rect x="32.76" y="554.02" width="33.36" height="33.36" fill="#86c000"/><rect x="65.32" y="554.02" width="33.36" height="33.36" fill="#86c000"/><rect x="97.88" y="554.02" width="33.36" height="33.36" fill="#ffc000"/><rect x="130.44" y="554.02" width="33.36" height="33.36" fill="#86c000"/><rect x="163.00" y="554.02" width="33.36" height="33.36" fill="#82002a"/><rect x="195.56" y="554.02" width="33.36" height="33.36" fill="#82002a"/><rect x="228.12" y="554.02" width="33.36" height="33.36" fill="#06806e"/><rect x="260.68" y="554.02" width="33.36" height="33.36" fill="#06806e"/><rect x="293.24" y="554.02" width="33.36" height="33.36" fill="#06806e"/><rect x="325.80" y="554.02" width="33.36" height="33.36" fill="#06806e"/><rect x="358.36" y="554.02" width="33.36" height="33.36" fill="#82002a"/><rect x="390.92" y="554.02" width="33.36" height="33.36" fill="#06806e"/><rect x="423.48" y="554.02" width="33.36" height="33.36" fill="#06806e"/><rect x="456.04" y="554.02" width="33.36" height="33.36" fill="#06806e"/><rect x="488.60" y="554.02" width="33.36" height="33.36" fill="#82002a"/><rect x="0.00" y="586.58" width="33.36" height="33.36" fill="#06806e"/><rect x="32.76" y="586.58" width="33.36" height="33.36" fill="#06806e"/><rect x="65.32" y="586.58" width="33.36" height="33.36" fill="#06806e"/><rect x="97.88" y="586.58" width="33.36" height="33.36" fill="#86c000"/><rect x="130.44" y="586.58" width="33.36" height="33.36" fill="#ffc000"/><rect x="163.00" y="586.58" width="33.36" height="33.36" fill="#86c000"/><rect x="195.56" y="586.58" width="33.36" height="33.36" fill="#86c000"/><rect x="228.12" y="586.58" width="33.36" height="33.36" fill="#82002a"/><rect x="260.68" y="586.58" width="33.36" height="33.36" fill="#06806e"/><rect x="293.24" y="586.58" width="33.36" height="33.36" fill="#86c000"/><rect x="325.80" y="586.58" width="33.36" height="33.36" fill="#86c000"/><rect x="358.36" y="586.58" width="33.36" height="33.36" fill="#82002a"/><rect x="390.92" y="586.58" width="33.36" height="33.36" fill="#82002a"/><rect x="423.48" y="586.58" width="33.36" height="33.36" fill="#86c000"/><rect x="456.04" y="586.58" width="33.36" height="33.36" fill="#82002a"/><rect x="488.60" y="586.58" width="33.36" height="33.36" fill="#82002a"/><rect x="0.00" y="619.14" width="33.36" height="33.36" fill="#06806e"/><rect x="32.76" y="619.14" width="33.36" height="33.36" fill="#06806e"/><rect x="65.32" y="619.14" width="33.36" height="33.36" fill="#06806e"/><rect x="97.88" y="619.14" width="33.36" height="33.36" fill="#86c000"/><rect x="130.44" y="619.14" width="33.36" height="33.36" fill="#82002a"/><rect x="163.00" y="619.14" width="33.36" height="33.36" fill="#86c000"/><rect x="195.56" y="619.14" width="33.36" height="33.36" fill="#86c000"/><rect x="228.12" y="619.14" width="33.36" height="33.36" fill="#82002a"/><rect x="260.68" y="619.14" width="33.36" height="33.36" fill="#86c000"/><rect x="293.24" y="619.14" width="33.36" height="33.36" fill="#86c000"/><rect x="325.80" y="619.14" width="33.36" height="33.36" fill="#86c000"/><rect x="358.36" y="619.14" width="33.36" height="33.36" fill="#86c000"/><rect x="390.92" y="619.14" width="33.36" height="33.36" fill="#86c000"/><rect x="423.48" y="619.14" width="33.36" height="33.36" fill="#06806e"/><rect x="456.04" y="619.14" width="33.36" height="33.36" fill="#86c000"/><rect x="488.60" y="619.14" width="33.36" height="33.36" fill="#06806e"/><path d="M32.76 0V629.5 M65.32 0V629.5 M97.88 0V629.5 M130.44 0V629.5 M163.00 0V629.5 M195.56 0V629.5 M228.12 0V629.5 M260.68 0V629.5 M293.24 0V629.5 M325.80 0V629.5 M358.36 0V629.5 M390.92 0V629.5 M423.48 0V629.5 M456.04 0V629.5 M488.60 0V629.5 M0 33.06H498 M0 65.62H498 M0 98.18H498 M0 130.74H498 M0 163.30H498 M0 195.86H498 M0 228.42H498 M0 260.98H498 M0 293.54H498 M0 326.10H498 M0 358.66H498 M0 391.22H498 M0 423.78H498 M0 456.34H498 M0 488.90H498 M0 521.46H498 M0 554.02H498 M0 586.58H498 M0 619.14H498" stroke="#c8ec58" stroke-width="1.35" fill="none"/></svg>
<div style="left:0px;top:790.5px;width:1407px;height:4px;background:#000;"></div>
<div style="left:0px;top:117px;width:1.2px;height:299px;background:#55555a;"></div>
<div style="left:0px;top:452px;width:1.2px;height:338.5px;background:#55555a;"></div>
</body></html>
